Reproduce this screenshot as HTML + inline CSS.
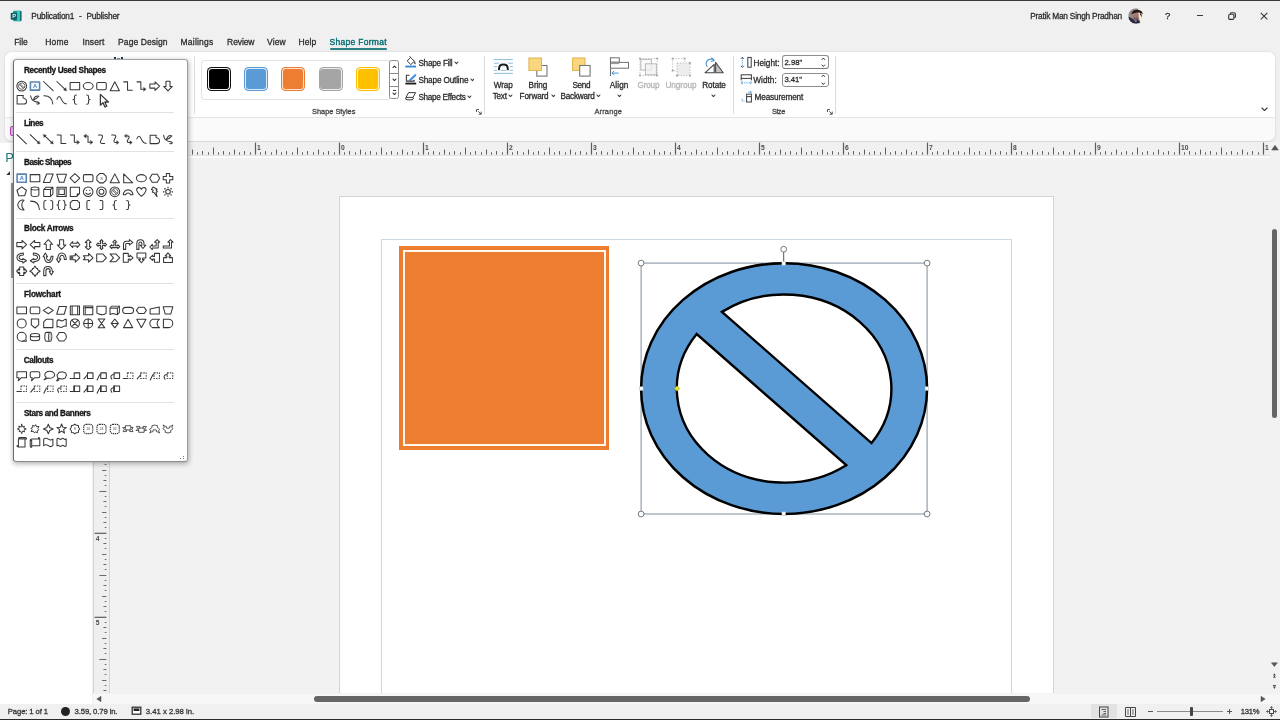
<!DOCTYPE html><html lang="en"><head><meta charset="utf-8"><title>Publication1 - Publisher</title><style>
*{box-sizing:border-box;margin:0;padding:0}
html,body{width:1280px;height:720px;overflow:hidden}
body{position:relative;background:#f0f0f0;font-family:"Liberation Sans",sans-serif;font-size:11.5px;color:#262626}
.abs{position:absolute}
.t{position:absolute;white-space:nowrap;line-height:1;-webkit-text-stroke:0.28px currentColor}
</style></head><body><div id="app" style="position:absolute;left:0;top:0;width:1280px;height:720px;will-change:transform">
<div class="abs" style="left:0;top:0;width:1280px;height:1px;background:#383838"></div>

<svg class="abs" style="left:10px;top:9.6px" width="12.4" height="12.4" viewBox="0 0 14 14">
<rect x="3.4" y="0.8" width="9.4" height="12" rx="1.3" fill="#1d9a96"/>
<rect x="7.8" y="0.8" width="3.4" height="12" fill="#3ec8be"/>
<rect x="11.4" y="1.2" width="1.5" height="11.2" rx=".6" fill="#0c6a6c"/>
<rect x="0.8" y="3" width="7.2" height="8" rx="1.1" fill="#0b5c66"/>
<text x="4.6" y="9.6" font-family="Liberation Sans, sans-serif" font-weight="bold" font-size="6.4" fill="#d8fbf8" text-anchor="middle">P</text>
</svg>
<div class="t" style="left:31.30px;top:10px;line-height:12px;font-size:8.3px;color:#2b2b2b;letter-spacing:-0.190px;word-spacing:2.744px;">Publication1 - Publisher</div><div class="t" style="left:1030.20px;top:10px;line-height:12px;font-size:8.3px;color:#2b2b2b;letter-spacing:-0.211px;">Pratik Man Singh Pradhan</div>
<svg class="abs" style="left:1127px;top:6.7px" width="18" height="18" viewBox="0 0 18 18">
<defs><clipPath id="av"><circle cx="9" cy="9" r="8"/></clipPath><filter id="avb" x="-10%" y="-10%" width="120%" height="120%"><feGaussianBlur stdDeviation="0.45"/></filter></defs>
<g clip-path="url(#av)"><g filter="url(#avb)"><rect x="-1" y="-1" width="20" height="20" fill="#968c8c"/>
<path d="M11 2 H19 V15 L13 15.5 Q11.4 9 11 2Z" fill="#f1ecdc"/>
<ellipse cx="8.7" cy="8.4" rx="2.7" ry="3.4" fill="#a9776a"/>
<path d="M6.6 9.8 Q8.8 13.4 10.8 9.6 L10.6 11.6 Q8.8 13.6 6.8 11.6Z" fill="#5e3f3c"/>
<path d="M4.2 7.4 Q5.4 2.4 10.6 2.8 Q15 3.4 16 7 Q12.4 4.8 9.8 5.6 Q6.4 6.4 4.2 7.4Z" fill="#22161a"/>
<path d="M13.4 5.4 Q15.4 7.4 14.6 10.4 Q14 8.4 12.8 7.4Z" fill="#4a3a38"/>
<path d="M0 9.6 Q3 10 5.8 12 Q7.6 13.6 8.8 13 Q10.2 11.6 11 12.6 Q13 15 14 16.4 L12 19 H0Z" fill="#2a2740"/>
<path d="M7.2 12.4 L8.8 13.6 L10 12.2 L9.4 15 L8 15Z" fill="#8c7f9e"/>
</g></g><circle cx="9" cy="9" r="8.1" fill="none" stroke="#f6f4f4" stroke-width=".7"/></svg>
<div class="t" style="left:1165.1px;top:11px;font-size:9.6px;color:#2e2e2e">?</div>
<div class="abs" style="left:1196.7px;top:14.7px;width:6.7px;height:1.1px;background:#3a3a3a"></div>
<svg class="abs" style="left:1227px;top:11px" width="10" height="10" viewBox="0 0 10 10" fill="none" stroke="#333" stroke-width="1.1">
<rect x="1.7" y="3.2" width="5.2" height="5.2" rx="1.2"/><path d="M3.4 3 V2.6 Q3.4 1.7 4.4 1.7 H7 Q8.4 1.7 8.4 3.1 V5.8 Q8.4 6.7 7.4 6.7 H7.1"/></svg>
<svg class="abs" style="left:1259px;top:10.7px" width="10" height="10" viewBox="0 0 10 10" fill="none" stroke="#333" stroke-width="1.05"><path d="M1.8 1.8 L8.3 8.3 M8.3 1.8 L1.8 8.3"/></svg>

<div class="t" style="left:14.30px;top:36px;line-height:12px;font-size:8.5px;color:#2b2b2b;letter-spacing:-0.126px;">File</div><div class="t" style="left:45.30px;top:36px;line-height:12px;font-size:8.5px;color:#2b2b2b;letter-spacing:0.153px;">Home</div><div class="t" style="left:82.40px;top:36px;line-height:12px;font-size:8.5px;color:#2b2b2b;letter-spacing:0.139px;">Insert</div><div class="t" style="left:118.10px;top:36px;line-height:12px;font-size:8.5px;color:#2b2b2b;letter-spacing:0.080px;">Page Design</div><div class="t" style="left:180.50px;top:36px;line-height:12px;font-size:8.5px;color:#2b2b2b;letter-spacing:0.227px;">Mailings</div><div class="t" style="left:227.10px;top:36px;line-height:12px;font-size:8.5px;color:#2b2b2b;letter-spacing:-0.096px;">Review</div><div class="t" style="left:267.10px;top:36px;line-height:12px;font-size:8.5px;color:#2b2b2b;letter-spacing:0.105px;">View</div><div class="t" style="left:298.60px;top:36px;line-height:12px;font-size:8.5px;color:#2b2b2b;letter-spacing:0.079px;">Help</div><div class="t" style="left:329.60px;top:36px;line-height:12px;font-size:8.5px;color:#17767b;letter-spacing:0.285px;text-shadow:0 0 0.4px #17767b;">Shape Format</div><div class="abs" style="left:330px;top:48px;width:56.8px;height:1.8px;background:#2a8186;border-radius:1px"></div>
<div class="abs" style="left:5.4px;top:52.2px;width:1269.4px;height:89.3px;background:#fafafa;border-radius:7px;box-shadow:0 0.5px 2.5px rgba(0,0,0,.15)"></div>
<div class="abs" style="left:5.4px;top:52.2px;width:1269.4px;height:66px;background:#fff;border-radius:7px 7px 0 0;border-bottom:1px solid #e6e6e6"></div>
<div class="abs" style="left:113.9px;top:57.3px;width:2.2px;height:2.4px;background:#22364e"></div><div class="abs" style="left:117.1px;top:57.9px;width:2.6px;height:1.6px;background:#8e8e8e"></div><div class="abs" style="left:120.8px;top:57.3px;width:2.2px;height:2.4px;background:#22364e"></div>
<div class="abs" style="left:194px;top:56px;width:1px;height:58px;background:#dcdcdc"></div>
<div class="abs" style="left:201px;top:60px;width:188.5px;height:39.5px;border:1px solid #e3e3e3;border-radius:3px 0 0 3px;background:#fff"></div>
<div class="abs" style="left:206.8px;top:67px;width:24px;height:24px;border-radius:4.6px;background:#111"></div><div class="abs" style="left:207.8px;top:68px;width:22px;height:22px;border-radius:3.8px;background:#f2f2f2"></div><div class="abs" style="left:208.70000000000002px;top:68.9px;width:20.2px;height:20.2px;border-radius:3.1px;background:#000"></div>
<div class="abs" style="left:243.8px;top:67px;width:24px;height:24px;border-radius:4.6px;background:#5b9bd5"></div><div class="abs" style="left:244.8px;top:68px;width:22px;height:22px;border-radius:3.8px;background:#deebf8"></div><div class="abs" style="left:245.70000000000002px;top:68.9px;width:20.2px;height:20.2px;border-radius:3.1px;background:#5b9bd5"></div>
<div class="abs" style="left:281px;top:67px;width:24px;height:24px;border-radius:4.6px;background:#ed7d31"></div><div class="abs" style="left:282px;top:68px;width:22px;height:22px;border-radius:3.8px;background:#fde3d0"></div><div class="abs" style="left:282.9px;top:68.9px;width:20.2px;height:20.2px;border-radius:3.1px;background:#ed7d31"></div>
<div class="abs" style="left:318.5px;top:67px;width:24px;height:24px;border-radius:4.6px;background:#a5a5a5"></div><div class="abs" style="left:319.5px;top:68px;width:22px;height:22px;border-radius:3.8px;background:#ececec"></div><div class="abs" style="left:320.4px;top:68.9px;width:20.2px;height:20.2px;border-radius:3.1px;background:#a5a5a5"></div>
<div class="abs" style="left:355.8px;top:67px;width:24px;height:24px;border-radius:4.6px;background:#ffc000"></div><div class="abs" style="left:356.8px;top:68px;width:22px;height:22px;border-radius:3.8px;background:#fff3cc"></div><div class="abs" style="left:357.7px;top:68.9px;width:20.2px;height:20.2px;border-radius:3.1px;background:#ffc000"></div>
<div class="abs" style="left:389.2px;top:59.8px;width:10.2px;height:39.6px;border:1px solid #8c8c8c;border-radius:2.6px;background:#fff"></div>
<div class="abs" style="left:389.7px;top:72.5px;width:9.2px;height:1px;background:#8c8c8c"></div><div class="abs" style="left:389.7px;top:85.7px;width:9.2px;height:1px;background:#8c8c8c"></div>
<svg class="abs" style="left:391.85px;top:64.50px" width="4.9" height="3.6" viewBox="0 0 4.9 3.6"><path d="M1 2.6 L2.45 1 L3.9 2.6" fill="none" stroke="#333" stroke-width="1.1" stroke-linecap="round" stroke-linejoin="round"/></svg>
<svg class="abs" style="left:391.85px;top:77.80px" width="4.9" height="3.6" viewBox="0 0 4.9 3.6"><path d="M1 1 L2.45 2.6 L3.9 1" fill="none" stroke="#333" stroke-width="1.1" stroke-linecap="round" stroke-linejoin="round"/></svg>
<div class="abs" style="left:392.5px;top:90.4px;width:3.6px;height:1px;background:#333"></div>
<svg class="abs" style="left:391.85px;top:91.70px" width="4.9" height="3.6" viewBox="0 0 4.9 3.6"><path d="M1 1 L2.45 2.6 L3.9 1" fill="none" stroke="#333" stroke-width="1.1" stroke-linecap="round" stroke-linejoin="round"/></svg>
<svg class="abs" style="left:404px;top:55px" width="14" height="14" viewBox="0 0 14 14" fill="none" stroke="#3a3a3a" stroke-width="1" stroke-linejoin="round"><path d="M3.2 6 L6.6 2.4 L10.4 6.2 L6.8 9.6 Z" fill="#fff"/><path d="M6.6 2.4 L5.6 1.2"/><path d="M10.6 6.4 Q12 8.4 11 9.2 Q10 8.4 10.6 6.4Z" fill="#3a3a3a" stroke-width=".5"/><rect x="1.3" y="10.6" width="10.7" height="1.9" fill="#3a8ad8" stroke="none"/></svg>
<div class="t" style="left:418.40px;top:58px;line-height:12px;font-size:8.2px;color:#2a2a2a;letter-spacing:-0.242px;">Shape Fill</div>
<svg class="abs" style="left:453.75px;top:61.00px" width="4.9" height="3.6" viewBox="0 0 4.9 3.6"><path d="M1 1 L2.45 2.6 L3.9 1" fill="none" stroke="#3a3a3a" stroke-width="1.1" stroke-linecap="round" stroke-linejoin="round"/></svg>
<svg class="abs" style="left:404px;top:72px" width="14" height="14" viewBox="0 0 14 14" fill="none" stroke="#3a3a3a" stroke-width="1.1" stroke-linejoin="round"><path d="M5.6 3.2 H2.4 V9.1 H10.2 V7.8"/><path d="M11.2 3.2 L6.2 8" stroke="#3f8fdc" stroke-width="2.1" stroke-linecap="round"/><path d="M5.6 8.7 L5 9.3" stroke="#3a3a3a" stroke-width="1"/><rect x="1.4" y="10.6" width="10.8" height="1.9" fill="#1e1e1e" stroke="none"/></svg>
<div class="t" style="left:418.40px;top:75px;line-height:12px;font-size:8.2px;color:#2a2a2a;letter-spacing:-0.154px;">Shape Outline</div>
<svg class="abs" style="left:469.55px;top:78.20px" width="4.9" height="3.6" viewBox="0 0 4.9 3.6"><path d="M1 1 L2.45 2.6 L3.9 1" fill="none" stroke="#3a3a3a" stroke-width="1.1" stroke-linecap="round" stroke-linejoin="round"/></svg>
<svg class="abs" style="left:404px;top:89px" width="14" height="14" viewBox="0 0 14 14" fill="none" stroke="#3a3a3a" stroke-width="1" stroke-linejoin="round"><path d="M4.6 3.6 H11.6 L9 8.4 H2 Z" fill="#fff"/><path d="M2 8.4 Q0.8 10.6 3 10.8 H8.2 Q9.8 10.6 9 8.4"/></svg>
<div class="t" style="left:418.40px;top:92px;line-height:12px;font-size:8.2px;color:#2a2a2a;letter-spacing:-0.287px;">Shape Effects</div>
<svg class="abs" style="left:467.25px;top:95.40px" width="4.9" height="3.6" viewBox="0 0 4.9 3.6"><path d="M1 1 L2.45 2.6 L3.9 1" fill="none" stroke="#3a3a3a" stroke-width="1.1" stroke-linecap="round" stroke-linejoin="round"/></svg>
<div class="t" style="left:312.10px;top:106px;line-height:12px;font-size:7.4px;color:#444;letter-spacing:-0.022px;">Shape Styles</div>
<svg class="abs" style="left:476.0px;top:109.1px" width="5.8" height="5.8" viewBox="0 0 7 7" fill="none" stroke="#4a4a4a" stroke-width="1.15"><path d="M0.6 3.6 V0.6 H3.6"/><path d="M2.8 2.8 L6.2 6.2 M6.3 3.2 V6.3 H3.2"/></svg>
<div class="abs" style="left:483.5px;top:56px;width:1px;height:58px;background:#dcdcdc"></div>
<svg class="abs" style="left:493px;top:56px" width="21" height="20" viewBox="0 0 21 20" fill="none"><path d="M0.9 3.6 H19.9 M0.9 7.2 H19.9 M0.9 10.7 H19.9 M0.9 14.3 H19.9 M0.9 17.4 H19.9" stroke="#8cbbdc" stroke-width="1"/><path d="M6 14.4 V13 Q6 8.2 10.4 8.2 Q14.8 8.2 14.8 13 V14.4" stroke="#fff" stroke-width="4.6"/><path d="M6 14 V13 Q6 8.6 10.4 8.6 Q14.8 8.6 14.8 13 V14" stroke="#1e1e1e" stroke-width="2"/></svg>
<div class="t" style="left:493.70px;top:80px;line-height:12px;font-size:8.2px;color:#2a2a2a;letter-spacing:-0.080px;">Wrap</div>
<div class="t" style="left:492.70px;top:91px;line-height:12px;font-size:8.2px;color:#2a2a2a;letter-spacing:-0.254px;">Text</div>
<svg class="abs" style="left:508.45px;top:93.80px" width="4.9" height="3.6" viewBox="0 0 4.9 3.6"><path d="M1 1 L2.45 2.6 L3.9 1" fill="none" stroke="#3a3a3a" stroke-width="1.1" stroke-linecap="round" stroke-linejoin="round"/></svg>
<svg class="abs" style="left:526px;top:55px" width="24" height="24" viewBox="0 0 24 24"><rect x="10.8" y="10.5" width="10.2" height="10.6" fill="#fff" stroke="#777" stroke-width="1.1"/><rect x="2.9" y="3" width="12.6" height="12.4" fill="#fad67f" stroke="#e0b24c" stroke-width="1"/></svg>
<div class="t" style="left:528.50px;top:80px;line-height:12px;font-size:8.2px;color:#2a2a2a;letter-spacing:-0.065px;">Bring</div>
<div class="t" style="left:519.60px;top:91px;line-height:12px;font-size:8.2px;color:#2a2a2a;letter-spacing:-0.162px;">Forward</div>
<svg class="abs" style="left:550.55px;top:93.90px" width="4.9" height="3.6" viewBox="0 0 4.9 3.6"><path d="M1 1 L2.45 2.6 L3.9 1" fill="none" stroke="#3a3a3a" stroke-width="1.1" stroke-linecap="round" stroke-linejoin="round"/></svg>
<svg class="abs" style="left:570px;top:55px" width="24" height="24" viewBox="0 0 24 24"><rect x="2.6" y="3" width="12.4" height="12.4" fill="#fad67f" stroke="#e0b24c" stroke-width="1"/><rect x="9.7" y="10.5" width="10.4" height="10.6" fill="#fff" stroke="#777" stroke-width="1.1"/></svg>
<div class="t" style="left:572.40px;top:80px;line-height:12px;font-size:8.2px;color:#2a2a2a;letter-spacing:-0.331px;">Send</div>
<div class="t" style="left:560.50px;top:91px;line-height:12px;font-size:8.2px;color:#2a2a2a;letter-spacing:-0.244px;">Backward</div>
<svg class="abs" style="left:596.45px;top:93.90px" width="4.9" height="3.6" viewBox="0 0 4.9 3.6"><path d="M1 1 L2.45 2.6 L3.9 1" fill="none" stroke="#3a3a3a" stroke-width="1.1" stroke-linecap="round" stroke-linejoin="round"/></svg>
<svg class="abs" style="left:608px;top:55px" width="24" height="24" viewBox="0 0 24 24" fill="none"><path d="M2.5 2.3 V21" stroke="#707070" stroke-width="1.1"/><rect x="2.5" y="2.8" width="8.8" height="4.4" fill="#fff" stroke="#707070"/><rect x="2.5" y="7.4" width="18" height="5.8" fill="#fff" stroke="#707070"/><rect x="3" y="7.4" width="8.3" height="1.7" fill="#9a9a9a"/><path d="M10.6 18.1 H4.2 M6.2 15.9 L4 18.1 L6.2 20.3" stroke="#4a96d0" stroke-width="1"/></svg>
<div class="t" style="left:609.80px;top:80px;line-height:12px;font-size:8.2px;color:#2a2a2a;letter-spacing:0.096px;">Align</div>
<svg class="abs" style="left:616.65px;top:93.70px" width="4.9" height="3.6" viewBox="0 0 4.9 3.6"><path d="M1 1 L2.45 2.6 L3.9 1" fill="none" stroke="#3a3a3a" stroke-width="1.1" stroke-linecap="round" stroke-linejoin="round"/></svg>
<svg class="abs" style="left:637px;top:55px" width="24" height="24" viewBox="0 0 24 24" fill="none" stroke="#b8b8b8"><rect x="3" y="3.6" width="17.2" height="16.8" stroke-dasharray="1.2 1.6" stroke-width="1"/><rect x="3.8" y="4.4" width="10.6" height="10.6" fill="#fafafa"/><rect x="8.4" y="8.8" width="11" height="11" fill="#f0f0f0" fill-opacity=".75"/><g fill="#a0a0a0" stroke="none"><rect x="2.1" y="2.7" width="1.8" height="1.8"/><rect x="19.3" y="2.7" width="1.8" height="1.8"/><rect x="2.1" y="19.5" width="1.8" height="1.8"/><rect x="19.3" y="19.5" width="1.8" height="1.8"/></g></svg>
<div class="t" style="left:637.60px;top:80px;line-height:12px;font-size:8.2px;color:#b4b4b4;letter-spacing:-0.213px;">Group</div>
<svg class="abs" style="left:669px;top:55px" width="24" height="24" viewBox="0 0 24 24" fill="none" stroke="#b8b8b8"><rect x="3.6" y="3.6" width="12" height="12" stroke-dasharray="1.2 1.6"/><rect x="8" y="8" width="13" height="12.6" fill="#ededed" stroke-dasharray="1.2 1.6"/><g fill="#a0a0a0" stroke="none"><rect x="2.7" y="2.7" width="1.8" height="1.8"/><rect x="14.7" y="2.7" width="1.8" height="1.8"/><rect x="2.7" y="14.7" width="1.8" height="1.8"/><rect x="20.1" y="7.1" width="1.8" height="1.8"/><rect x="20.1" y="19.7" width="1.8" height="1.8"/><rect x="7.1" y="19.7" width="1.8" height="1.8"/></g></svg>
<div class="t" style="left:665.50px;top:80px;line-height:12px;font-size:8.2px;color:#b4b4b4;letter-spacing:-0.060px;">Ungroup</div>
<svg class="abs" style="left:702px;top:55px" width="24" height="24" viewBox="0 0 24 24" fill="none"><path d="M3 17.8 L12.2 9.4 V17.8 Z" fill="#fff" stroke="#444" stroke-width="1.1" stroke-linejoin="round"/><path d="M13.6 7.2 L21.2 17.8 H13.6 Z" fill="#c4c4c4" stroke="#4a4a4a" stroke-width="1.1" stroke-linejoin="round"/><path d="M5.4 12 Q2.6 7.6 6 5 Q9.4 3 12 5.4" stroke="#4a96d0" stroke-width="1.1"/><path d="M9.4 2.6 L12.2 5.4 L8.8 6.6" stroke="#4a96d0" stroke-width="1.1" stroke-linejoin="round"/></svg>
<div class="t" style="left:702.30px;top:80px;line-height:12px;font-size:8.2px;color:#2a2a2a;letter-spacing:-0.104px;">Rotate</div>
<svg class="abs" style="left:711.15px;top:93.70px" width="4.9" height="3.6" viewBox="0 0 4.9 3.6"><path d="M1 1 L2.45 2.6 L3.9 1" fill="none" stroke="#3a3a3a" stroke-width="1.1" stroke-linecap="round" stroke-linejoin="round"/></svg>
<div class="t" style="left:594.50px;top:106px;line-height:12px;font-size:7.4px;color:#444;letter-spacing:0.172px;">Arrange</div>
<div class="abs" style="left:733px;top:56px;width:1px;height:58px;background:#dcdcdc"></div>
<svg class="abs" style="left:740px;top:56px" width="13" height="13" viewBox="0 0 13 13" fill="none"><rect x="7.8" y="1.4" width="3.4" height="9.8" stroke="#3a3a3a" fill="#fff"/><path d="M2.4 2 V10.8" stroke="#4a96d0" stroke-dasharray="1.1 1.1"/><path d="M1 2.8 L2.4 1.2 L3.8 2.8 M1 9.8 L2.4 11.4 L3.8 9.8" stroke="#3a3a3a" stroke-width=".9"/></svg>
<div class="t" style="left:753.60px;top:58px;line-height:12px;font-size:8.2px;color:#2a2a2a;letter-spacing:-0.008px;">Height:</div>
<div class="abs" style="left:782.4px;top:54.9px;width:47px;height:14.6px;border:1px solid #8e8e8e;border-bottom:1.4px solid #787878;border-radius:3px;background:#fff"></div>
<div class="t" style="left:784.50px;top:57px;line-height:12px;font-size:7.7px;color:#2a2a2a;letter-spacing:0.019px;">2.98&quot;</div>
<svg class="abs" style="left:821.10px;top:57.15px" width="4.6" height="3.5" viewBox="0 0 4.6 3.5"><path d="M1 2.5 L2.3 1 L3.6 2.5" fill="none" stroke="#333" stroke-width="1" stroke-linecap="round" stroke-linejoin="round"/></svg>
<svg class="abs" style="left:821.10px;top:64.05px" width="4.6" height="3.5" viewBox="0 0 4.6 3.5"><path d="M1 1 L2.3 2.5 L3.6 1" fill="none" stroke="#333" stroke-width="1" stroke-linecap="round" stroke-linejoin="round"/></svg>
<svg class="abs" style="left:740px;top:73px" width="13" height="13" viewBox="0 0 13 13" fill="none"><rect x="1.2" y="1.8" width="10.2" height="3.6" stroke="#3a3a3a" fill="#fff"/><path d="M1.2 5.4 V7.4 M11.4 5.4 V7.4" stroke="#3a3a3a"/><path d="M2 9.8 H10.8" stroke="#4a96d0" stroke-dasharray="1.1 1.1"/><path d="M2.6 8.4 L1 9.8 L2.6 11.2 M10 8.4 L11.6 9.8 L10 11.2" stroke="#4a96d0" stroke-width=".9"/></svg>
<div class="t" style="left:753.30px;top:75px;line-height:12px;font-size:8.2px;color:#2a2a2a;letter-spacing:0.047px;">Width:</div>
<div class="abs" style="left:782.4px;top:72.6px;width:47px;height:14.7px;border:1px solid #8e8e8e;border-radius:3px;background:#fff"></div>
<div class="t" style="left:784.50px;top:74px;line-height:12px;font-size:7.7px;color:#2a2a2a;letter-spacing:-0.081px;">3.41&quot;</div>
<svg class="abs" style="left:821.10px;top:74.25px" width="4.6" height="3.5" viewBox="0 0 4.6 3.5"><path d="M1 2.5 L2.3 1 L3.6 2.5" fill="none" stroke="#333" stroke-width="1" stroke-linecap="round" stroke-linejoin="round"/></svg>
<svg class="abs" style="left:821.10px;top:81.85px" width="4.6" height="3.5" viewBox="0 0 4.6 3.5"><path d="M1 1 L2.3 2.5 L3.6 1" fill="none" stroke="#333" stroke-width="1" stroke-linecap="round" stroke-linejoin="round"/></svg>
<svg class="abs" style="left:740px;top:91px" width="13" height="13" viewBox="0 0 13 13" fill="none"><rect x="6.6" y="5.6" width="4.8" height="5.4" stroke="#3a3a3a" fill="#fff"/><path d="M6.6 3.2 H11.4 M6.6 2.6 V5.6 M11.4 2.6 V5.6" stroke="#3a3a3a" stroke-width=".9"/><path d="M2.2 7.6 V11 M4 9.4 V11" stroke="#4a96d0" stroke-dasharray="1 .8"/><path d="M8 1.2 H11.4 M10.2 0.2 L11.4 1.2 L10.2 2.2" stroke="#4a96d0" stroke-width=".8"/></svg>
<div class="t" style="left:754.50px;top:92px;line-height:12px;font-size:8.2px;color:#2a2a2a;letter-spacing:-0.124px;">Measurement</div>
<div class="t" style="left:771.90px;top:106px;line-height:12px;font-size:7.4px;color:#444;letter-spacing:-0.298px;">Size</div>
<svg class="abs" style="left:826.9px;top:109.1px" width="5.8" height="5.8" viewBox="0 0 7 7" fill="none" stroke="#4a4a4a" stroke-width="1.15"><path d="M0.6 3.6 V0.6 H3.6"/><path d="M2.8 2.8 L6.2 6.2 M6.3 3.2 V6.3 H3.2"/></svg>
<div class="abs" style="left:834.6px;top:56px;width:1px;height:58px;background:#dcdcdc"></div>
<svg class="abs" style="left:1260.90px;top:106.70px" width="7" height="4.6" viewBox="0 0 7 4.6"><path d="M1 1 L3.5 3.6 L6 1" fill="none" stroke="#333" stroke-width="1.1" stroke-linecap="round" stroke-linejoin="round"/></svg>
<div class="abs" style="left:0;top:142px;width:1280px;height:562px;background:#f2f2f2"></div>
<div class="abs" style="left:110px;top:142px;width:1159.5px;height:14.2px;background:#f0f0f0;border-bottom:1px solid #e2e2e2"></div>
<div class="abs" style="left:110px;top:156.2px;width:1159.5px;height:1.8px;background:#fbfbfb"></div>
<div class="abs" style="left:92.5px;top:157px;width:17.2px;height:536px;background:#efefef;border-left:1px solid #d2d2d2;border-right:1px solid #d4d4d4"></div>
<div class="abs" style="left:0;top:143px;width:92px;height:561px;background:#fff"></div>

<div class="t" style="left:5.2px;top:150.9px;font-size:13.1px;color:#217a7c;-webkit-text-stroke:0">P</div>
<svg class="abs" style="left:6px;top:171.4px" width="4.4" height="4.4" viewBox="0 0 6 6"><path d="M5.4 0.4 V5.4 H0.4Z" fill="#2a2a2a"/></svg>
<div class="abs" style="left:11px;top:183px;width:2.4px;height:95px;background:#959595"></div>
<div class="abs" style="left:10.2px;top:125.6px;width:5px;height:10px;background:#e9c3ea;border:1.3px solid #b646b8;border-radius:2px 0 0 2px"></div>

<div class="abs" style="left:92.5px;top:693.5px;width:1187.5px;height:10.5px;background:#f7f7f7"></div><div class="abs" style="left:338.9px;top:195.6px;width:715.6px;height:497.9px;background:#fff;border:1px solid #d4d4d4;border-bottom:none"></div>
<div class="abs" style="left:380.8px;top:238.7px;width:631.6px;height:454.8px;border:1px solid #c6d9e5;border-bottom:none"></div>
<div class="abs" style="left:398.9px;top:246.4px;width:210.2px;height:203.4px;background:#ed7d31"></div>
<div class="abs" style="left:402.8px;top:250.3px;width:202.8px;height:196.1px;border:2.6px solid #fff6ec"></div>
<svg class="abs" style="left:0;top:0" width="1280" height="720" viewBox="0 0 1280 720"><rect x="641.1" y="263.1" width="286.0" height="250.89999999999998" fill="none" stroke="#8a97a8" stroke-width="1.1"/><ellipse cx="784.1" cy="388.55" rx="143.0" ry="125.4" fill="#5b9bd5" stroke="#000" stroke-width="2.5"/><path d="M721.96 311.89 A107.25 94.05 0 0 1 871.52 443.04 Z" fill="#fff" stroke="#000" stroke-width="2.4" stroke-linejoin="miter"/><path d="M846.24 465.21 A107.25 94.05 0 0 1 696.68 334.06 Z" fill="#fff" stroke="#000" stroke-width="2.4" stroke-linejoin="miter"/><line x1="783.7" y1="252" x2="783.7" y2="261.6" stroke="#454545" stroke-width="0.9"/><circle cx="641.1" cy="263.1" r="2.9" fill="#fff" stroke="#636363" stroke-width=".85"/><circle cx="927.1" cy="263.1" r="2.9" fill="#fff" stroke="#636363" stroke-width=".85"/><circle cx="641.1" cy="514.0" r="2.9" fill="#fff" stroke="#636363" stroke-width=".85"/><circle cx="927.1" cy="514.0" r="2.9" fill="#fff" stroke="#636363" stroke-width=".85"/><circle cx="783.7" cy="249.2" r="2.9" fill="#fff" stroke="#636363" stroke-width=".85"/><rect x="781.95" y="261.65000000000003" width="3.5" height="3.5" fill="#fafdff" stroke="#b9c4d0" stroke-width="0.5"/><rect x="781.95" y="511.95000000000005" width="3.5" height="3.5" fill="#fafdff" stroke="#b9c4d0" stroke-width="0.5"/><rect x="639.5500000000001" y="386.8" width="3.5" height="3.5" fill="#fafdff" stroke="#b9c4d0" stroke-width="0.5"/><rect x="925.15" y="386.8" width="3.5" height="3.5" fill="#fafdff" stroke="#b9c4d0" stroke-width="0.5"/><rect x="675.1" y="386.65000000000003" width="3.8" height="3.8" transform="rotate(45 677 388.55)" fill="#e6e61a" stroke="#8e8e3a" stroke-width="0.6"/></svg>
<svg class="abs" style="left:0;top:0" width="1280" height="160" viewBox="0 0 1280 160"><g font-family="Liberation Sans, sans-serif" font-size="6.7" font-weight="bold" fill="#4a4a4a"><rect x="113" y="152.30" width="1" height="2.30" fill="#5e5e5e"/><rect x="118" y="151.10" width="1" height="3.50" fill="#5e5e5e"/><rect x="124" y="152.30" width="1" height="2.30" fill="#5e5e5e"/><rect x="129" y="147.60" width="1" height="7.00" fill="#5e5e5e"/><rect x="134" y="152.30" width="1" height="2.30" fill="#5e5e5e"/><rect x="139" y="151.10" width="1" height="3.50" fill="#5e5e5e"/><rect x="145" y="152.30" width="1" height="2.30" fill="#5e5e5e"/><rect x="150" y="149.60" width="1" height="5.00" fill="#5e5e5e"/><rect x="155" y="152.30" width="1" height="2.30" fill="#5e5e5e"/><rect x="160" y="151.10" width="1" height="3.50" fill="#5e5e5e"/><rect x="166" y="152.30" width="1" height="2.30" fill="#5e5e5e"/><rect x="170.90" y="142.6" width="1.2" height="12" fill="#5c5c5c"/><rect x="176" y="152.30" width="1" height="2.30" fill="#5e5e5e"/><rect x="181" y="151.10" width="1" height="3.50" fill="#5e5e5e"/><rect x="187" y="152.30" width="1" height="2.30" fill="#5e5e5e"/><rect x="192" y="149.60" width="1" height="5.00" fill="#5e5e5e"/><rect x="197" y="152.30" width="1" height="2.30" fill="#5e5e5e"/><rect x="202" y="151.10" width="1" height="3.50" fill="#5e5e5e"/><rect x="208" y="152.30" width="1" height="2.30" fill="#5e5e5e"/><rect x="213" y="147.60" width="1" height="7.00" fill="#5e5e5e"/><rect x="218" y="152.30" width="1" height="2.30" fill="#5e5e5e"/><rect x="223" y="151.10" width="1" height="3.50" fill="#5e5e5e"/><rect x="229" y="152.30" width="1" height="2.30" fill="#5e5e5e"/><rect x="234" y="149.60" width="1" height="5.00" fill="#5e5e5e"/><rect x="239" y="152.30" width="1" height="2.30" fill="#5e5e5e"/><rect x="244" y="151.10" width="1" height="3.50" fill="#5e5e5e"/><rect x="250" y="152.30" width="1" height="2.30" fill="#5e5e5e"/><rect x="254.90" y="142.6" width="1.2" height="12" fill="#5c5c5c"/><rect x="260" y="152.30" width="1" height="2.30" fill="#5e5e5e"/><rect x="265" y="151.10" width="1" height="3.50" fill="#5e5e5e"/><rect x="271" y="152.30" width="1" height="2.30" fill="#5e5e5e"/><rect x="276" y="149.60" width="1" height="5.00" fill="#5e5e5e"/><rect x="281" y="152.30" width="1" height="2.30" fill="#5e5e5e"/><rect x="286" y="151.10" width="1" height="3.50" fill="#5e5e5e"/><rect x="292" y="152.30" width="1" height="2.30" fill="#5e5e5e"/><rect x="297" y="147.60" width="1" height="7.00" fill="#5e5e5e"/><rect x="302" y="152.30" width="1" height="2.30" fill="#5e5e5e"/><rect x="307" y="151.10" width="1" height="3.50" fill="#5e5e5e"/><rect x="313" y="152.30" width="1" height="2.30" fill="#5e5e5e"/><rect x="318" y="149.60" width="1" height="5.00" fill="#5e5e5e"/><rect x="323" y="152.30" width="1" height="2.30" fill="#5e5e5e"/><rect x="328" y="151.10" width="1" height="3.50" fill="#5e5e5e"/><rect x="334" y="152.30" width="1" height="2.30" fill="#5e5e5e"/><rect x="338.90" y="142.6" width="1.2" height="12" fill="#5c5c5c"/><rect x="344" y="152.30" width="1" height="2.30" fill="#5e5e5e"/><rect x="349" y="151.10" width="1" height="3.50" fill="#5e5e5e"/><rect x="355" y="152.30" width="1" height="2.30" fill="#5e5e5e"/><rect x="360" y="149.60" width="1" height="5.00" fill="#5e5e5e"/><rect x="365" y="152.30" width="1" height="2.30" fill="#5e5e5e"/><rect x="370" y="151.10" width="1" height="3.50" fill="#5e5e5e"/><rect x="376" y="152.30" width="1" height="2.30" fill="#5e5e5e"/><rect x="381" y="147.60" width="1" height="7.00" fill="#5e5e5e"/><rect x="386" y="152.30" width="1" height="2.30" fill="#5e5e5e"/><rect x="391" y="151.10" width="1" height="3.50" fill="#5e5e5e"/><rect x="397" y="152.30" width="1" height="2.30" fill="#5e5e5e"/><rect x="402" y="149.60" width="1" height="5.00" fill="#5e5e5e"/><rect x="407" y="152.30" width="1" height="2.30" fill="#5e5e5e"/><rect x="412" y="151.10" width="1" height="3.50" fill="#5e5e5e"/><rect x="418" y="152.30" width="1" height="2.30" fill="#5e5e5e"/><rect x="422.90" y="142.6" width="1.2" height="12" fill="#5c5c5c"/><rect x="428" y="152.30" width="1" height="2.30" fill="#5e5e5e"/><rect x="433" y="151.10" width="1" height="3.50" fill="#5e5e5e"/><rect x="439" y="152.30" width="1" height="2.30" fill="#5e5e5e"/><rect x="444" y="149.60" width="1" height="5.00" fill="#5e5e5e"/><rect x="449" y="152.30" width="1" height="2.30" fill="#5e5e5e"/><rect x="454" y="151.10" width="1" height="3.50" fill="#5e5e5e"/><rect x="460" y="152.30" width="1" height="2.30" fill="#5e5e5e"/><rect x="465" y="147.60" width="1" height="7.00" fill="#5e5e5e"/><rect x="470" y="152.30" width="1" height="2.30" fill="#5e5e5e"/><rect x="475" y="151.10" width="1" height="3.50" fill="#5e5e5e"/><rect x="481" y="152.30" width="1" height="2.30" fill="#5e5e5e"/><rect x="486" y="149.60" width="1" height="5.00" fill="#5e5e5e"/><rect x="491" y="152.30" width="1" height="2.30" fill="#5e5e5e"/><rect x="496" y="151.10" width="1" height="3.50" fill="#5e5e5e"/><rect x="502" y="152.30" width="1" height="2.30" fill="#5e5e5e"/><rect x="506.90" y="142.6" width="1.2" height="12" fill="#5c5c5c"/><rect x="512" y="152.30" width="1" height="2.30" fill="#5e5e5e"/><rect x="517" y="151.10" width="1" height="3.50" fill="#5e5e5e"/><rect x="523" y="152.30" width="1" height="2.30" fill="#5e5e5e"/><rect x="528" y="149.60" width="1" height="5.00" fill="#5e5e5e"/><rect x="533" y="152.30" width="1" height="2.30" fill="#5e5e5e"/><rect x="538" y="151.10" width="1" height="3.50" fill="#5e5e5e"/><rect x="544" y="152.30" width="1" height="2.30" fill="#5e5e5e"/><rect x="549" y="147.60" width="1" height="7.00" fill="#5e5e5e"/><rect x="554" y="152.30" width="1" height="2.30" fill="#5e5e5e"/><rect x="559" y="151.10" width="1" height="3.50" fill="#5e5e5e"/><rect x="565" y="152.30" width="1" height="2.30" fill="#5e5e5e"/><rect x="570" y="149.60" width="1" height="5.00" fill="#5e5e5e"/><rect x="575" y="152.30" width="1" height="2.30" fill="#5e5e5e"/><rect x="580" y="151.10" width="1" height="3.50" fill="#5e5e5e"/><rect x="586" y="152.30" width="1" height="2.30" fill="#5e5e5e"/><rect x="590.90" y="142.6" width="1.2" height="12" fill="#5c5c5c"/><rect x="596" y="152.30" width="1" height="2.30" fill="#5e5e5e"/><rect x="601" y="151.10" width="1" height="3.50" fill="#5e5e5e"/><rect x="607" y="152.30" width="1" height="2.30" fill="#5e5e5e"/><rect x="612" y="149.60" width="1" height="5.00" fill="#5e5e5e"/><rect x="617" y="152.30" width="1" height="2.30" fill="#5e5e5e"/><rect x="622" y="151.10" width="1" height="3.50" fill="#5e5e5e"/><rect x="628" y="152.30" width="1" height="2.30" fill="#5e5e5e"/><rect x="633" y="147.60" width="1" height="7.00" fill="#5e5e5e"/><rect x="638" y="152.30" width="1" height="2.30" fill="#5e5e5e"/><rect x="643" y="151.10" width="1" height="3.50" fill="#5e5e5e"/><rect x="649" y="152.30" width="1" height="2.30" fill="#5e5e5e"/><rect x="654" y="149.60" width="1" height="5.00" fill="#5e5e5e"/><rect x="659" y="152.30" width="1" height="2.30" fill="#5e5e5e"/><rect x="664" y="151.10" width="1" height="3.50" fill="#5e5e5e"/><rect x="670" y="152.30" width="1" height="2.30" fill="#5e5e5e"/><rect x="674.90" y="142.6" width="1.2" height="12" fill="#5c5c5c"/><rect x="680" y="152.30" width="1" height="2.30" fill="#5e5e5e"/><rect x="685" y="151.10" width="1" height="3.50" fill="#5e5e5e"/><rect x="691" y="152.30" width="1" height="2.30" fill="#5e5e5e"/><rect x="696" y="149.60" width="1" height="5.00" fill="#5e5e5e"/><rect x="701" y="152.30" width="1" height="2.30" fill="#5e5e5e"/><rect x="706" y="151.10" width="1" height="3.50" fill="#5e5e5e"/><rect x="712" y="152.30" width="1" height="2.30" fill="#5e5e5e"/><rect x="717" y="147.60" width="1" height="7.00" fill="#5e5e5e"/><rect x="722" y="152.30" width="1" height="2.30" fill="#5e5e5e"/><rect x="727" y="151.10" width="1" height="3.50" fill="#5e5e5e"/><rect x="733" y="152.30" width="1" height="2.30" fill="#5e5e5e"/><rect x="738" y="149.60" width="1" height="5.00" fill="#5e5e5e"/><rect x="743" y="152.30" width="1" height="2.30" fill="#5e5e5e"/><rect x="748" y="151.10" width="1" height="3.50" fill="#5e5e5e"/><rect x="754" y="152.30" width="1" height="2.30" fill="#5e5e5e"/><rect x="758.90" y="142.6" width="1.2" height="12" fill="#5c5c5c"/><rect x="764" y="152.30" width="1" height="2.30" fill="#5e5e5e"/><rect x="769" y="151.10" width="1" height="3.50" fill="#5e5e5e"/><rect x="775" y="152.30" width="1" height="2.30" fill="#5e5e5e"/><rect x="780" y="149.60" width="1" height="5.00" fill="#5e5e5e"/><rect x="785" y="152.30" width="1" height="2.30" fill="#5e5e5e"/><rect x="790" y="151.10" width="1" height="3.50" fill="#5e5e5e"/><rect x="796" y="152.30" width="1" height="2.30" fill="#5e5e5e"/><rect x="801" y="147.60" width="1" height="7.00" fill="#5e5e5e"/><rect x="806" y="152.30" width="1" height="2.30" fill="#5e5e5e"/><rect x="811" y="151.10" width="1" height="3.50" fill="#5e5e5e"/><rect x="817" y="152.30" width="1" height="2.30" fill="#5e5e5e"/><rect x="822" y="149.60" width="1" height="5.00" fill="#5e5e5e"/><rect x="827" y="152.30" width="1" height="2.30" fill="#5e5e5e"/><rect x="832" y="151.10" width="1" height="3.50" fill="#5e5e5e"/><rect x="838" y="152.30" width="1" height="2.30" fill="#5e5e5e"/><rect x="842.90" y="142.6" width="1.2" height="12" fill="#5c5c5c"/><rect x="848" y="152.30" width="1" height="2.30" fill="#5e5e5e"/><rect x="853" y="151.10" width="1" height="3.50" fill="#5e5e5e"/><rect x="859" y="152.30" width="1" height="2.30" fill="#5e5e5e"/><rect x="864" y="149.60" width="1" height="5.00" fill="#5e5e5e"/><rect x="869" y="152.30" width="1" height="2.30" fill="#5e5e5e"/><rect x="874" y="151.10" width="1" height="3.50" fill="#5e5e5e"/><rect x="880" y="152.30" width="1" height="2.30" fill="#5e5e5e"/><rect x="885" y="147.60" width="1" height="7.00" fill="#5e5e5e"/><rect x="890" y="152.30" width="1" height="2.30" fill="#5e5e5e"/><rect x="895" y="151.10" width="1" height="3.50" fill="#5e5e5e"/><rect x="901" y="152.30" width="1" height="2.30" fill="#5e5e5e"/><rect x="906" y="149.60" width="1" height="5.00" fill="#5e5e5e"/><rect x="911" y="152.30" width="1" height="2.30" fill="#5e5e5e"/><rect x="916" y="151.10" width="1" height="3.50" fill="#5e5e5e"/><rect x="922" y="152.30" width="1" height="2.30" fill="#5e5e5e"/><rect x="926.90" y="142.6" width="1.2" height="12" fill="#5c5c5c"/><rect x="932" y="152.30" width="1" height="2.30" fill="#5e5e5e"/><rect x="937" y="151.10" width="1" height="3.50" fill="#5e5e5e"/><rect x="943" y="152.30" width="1" height="2.30" fill="#5e5e5e"/><rect x="948" y="149.60" width="1" height="5.00" fill="#5e5e5e"/><rect x="953" y="152.30" width="1" height="2.30" fill="#5e5e5e"/><rect x="958" y="151.10" width="1" height="3.50" fill="#5e5e5e"/><rect x="964" y="152.30" width="1" height="2.30" fill="#5e5e5e"/><rect x="969" y="147.60" width="1" height="7.00" fill="#5e5e5e"/><rect x="974" y="152.30" width="1" height="2.30" fill="#5e5e5e"/><rect x="979" y="151.10" width="1" height="3.50" fill="#5e5e5e"/><rect x="985" y="152.30" width="1" height="2.30" fill="#5e5e5e"/><rect x="990" y="149.60" width="1" height="5.00" fill="#5e5e5e"/><rect x="995" y="152.30" width="1" height="2.30" fill="#5e5e5e"/><rect x="1000" y="151.10" width="1" height="3.50" fill="#5e5e5e"/><rect x="1006" y="152.30" width="1" height="2.30" fill="#5e5e5e"/><rect x="1010.90" y="142.6" width="1.2" height="12" fill="#5c5c5c"/><rect x="1016" y="152.30" width="1" height="2.30" fill="#5e5e5e"/><rect x="1021" y="151.10" width="1" height="3.50" fill="#5e5e5e"/><rect x="1027" y="152.30" width="1" height="2.30" fill="#5e5e5e"/><rect x="1032" y="149.60" width="1" height="5.00" fill="#5e5e5e"/><rect x="1037" y="152.30" width="1" height="2.30" fill="#5e5e5e"/><rect x="1042" y="151.10" width="1" height="3.50" fill="#5e5e5e"/><rect x="1048" y="152.30" width="1" height="2.30" fill="#5e5e5e"/><rect x="1053" y="147.60" width="1" height="7.00" fill="#5e5e5e"/><rect x="1058" y="152.30" width="1" height="2.30" fill="#5e5e5e"/><rect x="1063" y="151.10" width="1" height="3.50" fill="#5e5e5e"/><rect x="1069" y="152.30" width="1" height="2.30" fill="#5e5e5e"/><rect x="1074" y="149.60" width="1" height="5.00" fill="#5e5e5e"/><rect x="1079" y="152.30" width="1" height="2.30" fill="#5e5e5e"/><rect x="1084" y="151.10" width="1" height="3.50" fill="#5e5e5e"/><rect x="1090" y="152.30" width="1" height="2.30" fill="#5e5e5e"/><rect x="1094.90" y="142.6" width="1.2" height="12" fill="#5c5c5c"/><rect x="1100" y="152.30" width="1" height="2.30" fill="#5e5e5e"/><rect x="1105" y="151.10" width="1" height="3.50" fill="#5e5e5e"/><rect x="1111" y="152.30" width="1" height="2.30" fill="#5e5e5e"/><rect x="1116" y="149.60" width="1" height="5.00" fill="#5e5e5e"/><rect x="1121" y="152.30" width="1" height="2.30" fill="#5e5e5e"/><rect x="1126" y="151.10" width="1" height="3.50" fill="#5e5e5e"/><rect x="1132" y="152.30" width="1" height="2.30" fill="#5e5e5e"/><rect x="1137" y="147.60" width="1" height="7.00" fill="#5e5e5e"/><rect x="1142" y="152.30" width="1" height="2.30" fill="#5e5e5e"/><rect x="1147" y="151.10" width="1" height="3.50" fill="#5e5e5e"/><rect x="1153" y="152.30" width="1" height="2.30" fill="#5e5e5e"/><rect x="1158" y="149.60" width="1" height="5.00" fill="#5e5e5e"/><rect x="1163" y="152.30" width="1" height="2.30" fill="#5e5e5e"/><rect x="1168" y="151.10" width="1" height="3.50" fill="#5e5e5e"/><rect x="1174" y="152.30" width="1" height="2.30" fill="#5e5e5e"/><rect x="1178.90" y="142.6" width="1.2" height="12" fill="#5c5c5c"/><rect x="1184" y="152.30" width="1" height="2.30" fill="#5e5e5e"/><rect x="1189" y="151.10" width="1" height="3.50" fill="#5e5e5e"/><rect x="1195" y="152.30" width="1" height="2.30" fill="#5e5e5e"/><rect x="1200" y="149.60" width="1" height="5.00" fill="#5e5e5e"/><rect x="1205" y="152.30" width="1" height="2.30" fill="#5e5e5e"/><rect x="1210" y="151.10" width="1" height="3.50" fill="#5e5e5e"/><rect x="1216" y="152.30" width="1" height="2.30" fill="#5e5e5e"/><rect x="1221" y="147.60" width="1" height="7.00" fill="#5e5e5e"/><rect x="1226" y="152.30" width="1" height="2.30" fill="#5e5e5e"/><rect x="1231" y="151.10" width="1" height="3.50" fill="#5e5e5e"/><rect x="1237" y="152.30" width="1" height="2.30" fill="#5e5e5e"/><rect x="1242" y="149.60" width="1" height="5.00" fill="#5e5e5e"/><rect x="1247" y="152.30" width="1" height="2.30" fill="#5e5e5e"/><rect x="1252" y="151.10" width="1" height="3.50" fill="#5e5e5e"/><rect x="1258" y="152.30" width="1" height="2.30" fill="#5e5e5e"/><rect x="1262.90" y="142.6" width="1.2" height="12" fill="#5c5c5c"/><text x="173.10" y="149.8">2</text><text x="257.10" y="149.8">1</text><text x="341.10" y="149.8">0</text><text x="425.10" y="149.8">1</text><text x="509.10" y="149.8">2</text><text x="593.10" y="149.8">3</text><text x="677.10" y="149.8">4</text><text x="761.10" y="149.8">5</text><text x="845.10" y="149.8">6</text><text x="929.10" y="149.8">7</text><text x="1013.10" y="149.8">8</text><text x="1097.10" y="149.8">9</text><text x="1181.10" y="149.8">10</text><text x="1265.10" y="149.8">1</text></g></svg>
<svg class="abs" style="left:0;top:0" width="120" height="700" viewBox="0 0 120 700"><g font-family="Liberation Sans, sans-serif" font-size="6.7" font-weight="bold" fill="#4a4a4a"><rect x="104.70" y="160" width="1.70" height="1" fill="#6a6a6a"/><rect x="103.40" y="165" width="3.00" height="1" fill="#6a6a6a"/><rect x="104.70" y="170" width="1.70" height="1" fill="#6a6a6a"/><rect x="102.10" y="176" width="4.30" height="1" fill="#6a6a6a"/><rect x="104.70" y="181" width="1.70" height="1" fill="#6a6a6a"/><rect x="103.40" y="186" width="3.00" height="1" fill="#6a6a6a"/><rect x="104.70" y="191" width="1.70" height="1" fill="#6a6a6a"/><rect x="94.60" y="196.70" width="11.80" height="1.2" fill="#5c5c5c"/><rect x="104.70" y="202" width="1.70" height="1" fill="#6a6a6a"/><rect x="103.40" y="207" width="3.00" height="1" fill="#6a6a6a"/><rect x="104.70" y="212" width="1.70" height="1" fill="#6a6a6a"/><rect x="102.10" y="218" width="4.30" height="1" fill="#6a6a6a"/><rect x="104.70" y="223" width="1.70" height="1" fill="#6a6a6a"/><rect x="103.40" y="228" width="3.00" height="1" fill="#6a6a6a"/><rect x="104.70" y="233" width="1.70" height="1" fill="#6a6a6a"/><rect x="99.40" y="239" width="7.00" height="1" fill="#6a6a6a"/><rect x="104.70" y="244" width="1.70" height="1" fill="#6a6a6a"/><rect x="103.40" y="249" width="3.00" height="1" fill="#6a6a6a"/><rect x="104.70" y="254" width="1.70" height="1" fill="#6a6a6a"/><rect x="102.10" y="260" width="4.30" height="1" fill="#6a6a6a"/><rect x="104.70" y="265" width="1.70" height="1" fill="#6a6a6a"/><rect x="103.40" y="270" width="3.00" height="1" fill="#6a6a6a"/><rect x="104.70" y="275" width="1.70" height="1" fill="#6a6a6a"/><rect x="94.60" y="280.70" width="11.80" height="1.2" fill="#5c5c5c"/><rect x="104.70" y="286" width="1.70" height="1" fill="#6a6a6a"/><rect x="103.40" y="291" width="3.00" height="1" fill="#6a6a6a"/><rect x="104.70" y="296" width="1.70" height="1" fill="#6a6a6a"/><rect x="102.10" y="302" width="4.30" height="1" fill="#6a6a6a"/><rect x="104.70" y="307" width="1.70" height="1" fill="#6a6a6a"/><rect x="103.40" y="312" width="3.00" height="1" fill="#6a6a6a"/><rect x="104.70" y="317" width="1.70" height="1" fill="#6a6a6a"/><rect x="99.40" y="323" width="7.00" height="1" fill="#6a6a6a"/><rect x="104.70" y="328" width="1.70" height="1" fill="#6a6a6a"/><rect x="103.40" y="333" width="3.00" height="1" fill="#6a6a6a"/><rect x="104.70" y="338" width="1.70" height="1" fill="#6a6a6a"/><rect x="102.10" y="344" width="4.30" height="1" fill="#6a6a6a"/><rect x="104.70" y="349" width="1.70" height="1" fill="#6a6a6a"/><rect x="103.40" y="354" width="3.00" height="1" fill="#6a6a6a"/><rect x="104.70" y="359" width="1.70" height="1" fill="#6a6a6a"/><rect x="94.60" y="364.70" width="11.80" height="1.2" fill="#5c5c5c"/><rect x="104.70" y="370" width="1.70" height="1" fill="#6a6a6a"/><rect x="103.40" y="375" width="3.00" height="1" fill="#6a6a6a"/><rect x="104.70" y="380" width="1.70" height="1" fill="#6a6a6a"/><rect x="102.10" y="386" width="4.30" height="1" fill="#6a6a6a"/><rect x="104.70" y="391" width="1.70" height="1" fill="#6a6a6a"/><rect x="103.40" y="396" width="3.00" height="1" fill="#6a6a6a"/><rect x="104.70" y="401" width="1.70" height="1" fill="#6a6a6a"/><rect x="99.40" y="407" width="7.00" height="1" fill="#6a6a6a"/><rect x="104.70" y="412" width="1.70" height="1" fill="#6a6a6a"/><rect x="103.40" y="417" width="3.00" height="1" fill="#6a6a6a"/><rect x="104.70" y="422" width="1.70" height="1" fill="#6a6a6a"/><rect x="102.10" y="428" width="4.30" height="1" fill="#6a6a6a"/><rect x="104.70" y="433" width="1.70" height="1" fill="#6a6a6a"/><rect x="103.40" y="438" width="3.00" height="1" fill="#6a6a6a"/><rect x="104.70" y="443" width="1.70" height="1" fill="#6a6a6a"/><rect x="94.60" y="448.70" width="11.80" height="1.2" fill="#5c5c5c"/><rect x="104.70" y="454" width="1.70" height="1" fill="#6a6a6a"/><rect x="103.40" y="459" width="3.00" height="1" fill="#6a6a6a"/><rect x="104.70" y="464" width="1.70" height="1" fill="#6a6a6a"/><rect x="102.10" y="470" width="4.30" height="1" fill="#6a6a6a"/><rect x="104.70" y="475" width="1.70" height="1" fill="#6a6a6a"/><rect x="103.40" y="480" width="3.00" height="1" fill="#6a6a6a"/><rect x="104.70" y="485" width="1.70" height="1" fill="#6a6a6a"/><rect x="99.40" y="491" width="7.00" height="1" fill="#6a6a6a"/><rect x="104.70" y="496" width="1.70" height="1" fill="#6a6a6a"/><rect x="103.40" y="501" width="3.00" height="1" fill="#6a6a6a"/><rect x="104.70" y="506" width="1.70" height="1" fill="#6a6a6a"/><rect x="102.10" y="512" width="4.30" height="1" fill="#6a6a6a"/><rect x="104.70" y="517" width="1.70" height="1" fill="#6a6a6a"/><rect x="103.40" y="522" width="3.00" height="1" fill="#6a6a6a"/><rect x="104.70" y="527" width="1.70" height="1" fill="#6a6a6a"/><rect x="94.60" y="532.70" width="11.80" height="1.2" fill="#5c5c5c"/><rect x="104.70" y="538" width="1.70" height="1" fill="#6a6a6a"/><rect x="103.40" y="543" width="3.00" height="1" fill="#6a6a6a"/><rect x="104.70" y="548" width="1.70" height="1" fill="#6a6a6a"/><rect x="102.10" y="554" width="4.30" height="1" fill="#6a6a6a"/><rect x="104.70" y="559" width="1.70" height="1" fill="#6a6a6a"/><rect x="103.40" y="564" width="3.00" height="1" fill="#6a6a6a"/><rect x="104.70" y="569" width="1.70" height="1" fill="#6a6a6a"/><rect x="99.40" y="575" width="7.00" height="1" fill="#6a6a6a"/><rect x="104.70" y="580" width="1.70" height="1" fill="#6a6a6a"/><rect x="103.40" y="585" width="3.00" height="1" fill="#6a6a6a"/><rect x="104.70" y="590" width="1.70" height="1" fill="#6a6a6a"/><rect x="102.10" y="596" width="4.30" height="1" fill="#6a6a6a"/><rect x="104.70" y="601" width="1.70" height="1" fill="#6a6a6a"/><rect x="103.40" y="606" width="3.00" height="1" fill="#6a6a6a"/><rect x="104.70" y="611" width="1.70" height="1" fill="#6a6a6a"/><rect x="94.60" y="616.70" width="11.80" height="1.2" fill="#5c5c5c"/><rect x="104.70" y="622" width="1.70" height="1" fill="#6a6a6a"/><rect x="103.40" y="627" width="3.00" height="1" fill="#6a6a6a"/><rect x="104.70" y="632" width="1.70" height="1" fill="#6a6a6a"/><rect x="102.10" y="638" width="4.30" height="1" fill="#6a6a6a"/><rect x="104.70" y="643" width="1.70" height="1" fill="#6a6a6a"/><rect x="103.40" y="648" width="3.00" height="1" fill="#6a6a6a"/><rect x="104.70" y="653" width="1.70" height="1" fill="#6a6a6a"/><rect x="99.40" y="659" width="7.00" height="1" fill="#6a6a6a"/><rect x="104.70" y="664" width="1.70" height="1" fill="#6a6a6a"/><rect x="103.40" y="669" width="3.00" height="1" fill="#6a6a6a"/><rect x="104.70" y="674" width="1.70" height="1" fill="#6a6a6a"/><rect x="102.10" y="680" width="4.30" height="1" fill="#6a6a6a"/><rect x="104.70" y="685" width="1.70" height="1" fill="#6a6a6a"/><rect x="103.40" y="690" width="3.00" height="1" fill="#6a6a6a"/><text x="95.8" y="204.90">0</text><text x="95.8" y="288.90">1</text><text x="95.8" y="372.90">2</text><text x="95.8" y="456.90">3</text><text x="95.8" y="540.90">4</text><text x="95.8" y="624.90">5</text></g></svg>

<svg class="abs" style="left:1268.5px;top:143.6px" width="12" height="8" viewBox="0 0 12 8"><path d="M6 1.3 L9.3 6 H2.7Z" fill="#555" stroke="#555" stroke-width=".6" stroke-linejoin="round"/></svg>
<div class="abs" style="left:1271.5px;top:229px;width:5.5px;height:189px;background:#666;border-radius:3px"></div>
<svg class="abs" style="left:1268px;top:656px" width="12" height="36" viewBox="0 0 12 36">
<path d="M3.4 6.8 H9.4 L6.4 10.6Z" fill="#555" stroke="#555" stroke-width=".5" stroke-linejoin="round"/>
<path d="M4.9 19.4 L6.4 17.3 L7.9 19.4Z M4.9 21.7 L6.4 19.6 L7.9 21.7Z" fill="#4a4a4a"/>
<path d="M4.9 29.1 H7.9 V29.9 H4.9Z M4.9 30.4 L6.4 32.9 L7.9 30.4Z" fill="#4a4a4a"/>
</svg>
<svg class="abs" style="left:93.8px;top:693.7px" width="10" height="10" viewBox="0 0 10 10"><path d="M2.8 5 L7 2.3 V7.7Z" fill="#555" stroke="#555" stroke-width=".5" stroke-linejoin="round"/></svg>
<svg class="abs" style="left:1258px;top:693.7px" width="10" height="10" viewBox="0 0 10 10"><path d="M7.2 5 L3 2.3 V7.7Z" fill="#555" stroke="#555" stroke-width=".5" stroke-linejoin="round"/></svg>
<div class="abs" style="left:313.5px;top:695.8px;width:716.2px;height:5.9px;background:#666;border-radius:3px"></div>


<div class="abs" style="left:0;top:704px;width:1280px;height:16px;background:#f0f0f0"></div>
<div class="abs" style="left:0;top:718.6px;width:1280px;height:1.4px;background:#2a2a2a"></div>
<div class="t" style="left:7.85px;top:706px;line-height:12px;font-size:7.7px;color:#333;letter-spacing:-0.118px;">Page: 1 of 1</div>
<div class="abs" style="left:60.5px;top:706.5px;width:9.5px;height:9.5px;border-radius:50%;background:#222"></div>
<div class="t" style="left:74.60px;top:706px;line-height:12px;font-size:7.7px;color:#333;letter-spacing:-0.118px;">3.59, 0.79 in.</div>
<svg class="abs" style="left:131px;top:706px" width="12" height="10" viewBox="0 0 12 10"><rect x="1.2" y="1.2" width="8.6" height="7" fill="#fff" stroke="#222" stroke-width="1.2"/><rect x="2.6" y="2.4" width="5.8" height="2.6" fill="#222"/></svg>
<div class="t" style="left:145.85px;top:706px;line-height:12px;font-size:7.7px;color:#333;letter-spacing:0.000px;">3.41 x 2.98 in.</div>
<div class="abs" style="left:1091px;top:704px;width:26px;height:14px;background:#e2e2e2"></div>
<svg class="abs" style="left:1098px;top:705.5px" width="12" height="12" viewBox="0 0 12 12" fill="none" stroke="#444" stroke-width="1"><rect x="1.5" y="1" width="8.5" height="10"/><path d="M3.5 3.5 H8 M5.5 5.5 H8 M5.5 7.5 H8 M3.5 9 H8" stroke-width=".8"/></svg>
<svg class="abs" style="left:1124px;top:705.5px" width="13" height="12" viewBox="0 0 13 12" fill="none" stroke="#444" stroke-width="1"><path d="M1.5 1.5 H6.5 V10.5 H1.5Z M6.5 1.5 H11.5 V10.5 H6.5Z"/><path d="M3 4 H5 M3 6 H5 M3 8 H5 M8 4 H10 M8 6 H10 M8 8 H10" stroke-width=".8"/></svg>
<div class="abs" style="left:1148px;top:711px;width:5px;height:1px;background:#555"></div>
<div class="abs" style="left:1157px;top:711px;width:66px;height:1px;background:#8a8a8a"></div>
<div class="abs" style="left:1190px;top:707px;width:2.6px;height:8.5px;background:#444;border-radius:1px"></div>
<div class="abs" style="left:1226.5px;top:711px;width:5px;height:1px;background:#555"></div>
<div class="abs" style="left:1228.5px;top:709px;width:1px;height:5px;background:#555"></div>
<div class="t" style="left:1240.85px;top:706px;line-height:12px;font-size:7.7px;color:#333;letter-spacing:-0.343px;">131%</div>
<svg class="abs" style="left:1266px;top:706px" width="11" height="11" viewBox="0 0 11 11" fill="none" stroke="#444" stroke-width="1"><rect x="3.5" y="3.5" width="4" height="4"/><path d="M5.5 0.6 V3 M5.5 8 V10.4 M0.6 5.5 H3 M8 5.5 H10.4 M4.2 1.8 L5.5 0.6 L6.8 1.8 M4.2 9.2 L5.5 10.4 L6.8 9.2 M1.8 4.2 L0.6 5.5 L1.8 6.8 M9.2 4.2 L10.4 5.5 L9.2 6.8" stroke-width=".8"/></svg>

<div class="abs" style="left:13.1px;top:59.2px;width:174.9px;height:403.2px;background:#fff;border-style:solid;border-width:1.4px 1.8px 1.4px 1.2px;border-color:#a2a2a2 #9a9a9a #8c8c8c #6c6c6c;border-radius:3.5px;box-shadow:0.5px 1.5px 5px rgba(0,0,0,.3)"></div>
<div class="abs" style="left:15.6px;top:111.8px;width:158.6px;height:1px;background:#e1e1e1"></div>
<div class="abs" style="left:15.6px;top:151.3px;width:158.6px;height:1px;background:#e1e1e1"></div>
<div class="abs" style="left:15.6px;top:217.7px;width:158.6px;height:1px;background:#e1e1e1"></div>
<div class="abs" style="left:15.6px;top:283.4px;width:158.6px;height:1px;background:#e1e1e1"></div>
<div class="abs" style="left:15.6px;top:349.2px;width:158.6px;height:1px;background:#e1e1e1"></div>
<div class="abs" style="left:15.6px;top:402.1px;width:158.6px;height:1px;background:#e1e1e1"></div>
<div class="t" style="left:24.00px;top:65px;line-height:12px;font-size:8.2px;color:#161616;font-weight:bold;letter-spacing:-0.301px;-webkit-text-stroke:0.3px #161616;">Recently Used Shapes</div>
<div class="t" style="left:24.00px;top:118px;line-height:12px;font-size:8.2px;color:#161616;font-weight:bold;letter-spacing:-0.458px;-webkit-text-stroke:0.3px #161616;">Lines</div>
<div class="t" style="left:24.00px;top:157px;line-height:12px;font-size:8.2px;color:#161616;font-weight:bold;letter-spacing:-0.521px;-webkit-text-stroke:0.3px #161616;">Basic Shapes</div>
<div class="t" style="left:24.00px;top:223px;line-height:12px;font-size:8.2px;color:#161616;font-weight:bold;letter-spacing:-0.257px;-webkit-text-stroke:0.3px #161616;">Block Arrows</div>
<div class="t" style="left:24.00px;top:289px;line-height:12px;font-size:8.2px;color:#161616;font-weight:bold;letter-spacing:-0.197px;-webkit-text-stroke:0.3px #161616;">Flowchart</div>
<div class="t" style="left:23.80px;top:355px;line-height:12px;font-size:8.2px;color:#161616;font-weight:bold;letter-spacing:-0.377px;-webkit-text-stroke:0.3px #161616;">Callouts</div>
<div class="t" style="left:24.00px;top:408px;line-height:12px;font-size:8.2px;color:#161616;font-weight:bold;letter-spacing:-0.351px;-webkit-text-stroke:0.3px #161616;">Stars and Banners</div>
<svg class="abs" style="left:0;top:0" width="200" height="470" viewBox="0 0 200 470" fill="none" stroke="#363636" stroke-width="1.12" stroke-linejoin="round" stroke-linecap="round"><g transform="translate(21.70,86.1) scale(0.92)"><circle r="5.3"/><path d="M-1.66,-3.08A3.5,3.5 0 0 1 3.08,1.66ZM1.66,3.08A3.5,3.5 0 0 1 -3.08,-1.66Z" stroke-width=".85"/></g><g transform="translate(35.00,86.1) scale(0.92)"><rect x="-5" y="-4.4" width="10" height="8.8" fill="#f6f9fc" stroke="#5d84ae" stroke-width="1.7"/><text x="0" y="2.3" font-size="6.2" font-weight="bold" text-anchor="middle" fill="#3f7fc4" stroke="none" font-family="Liberation Sans, sans-serif">A</text></g><g transform="translate(48.30,86.1) scale(0.92)"><path d="M-5.2,-5L5.2,5"/></g><g transform="translate(61.60,86.1) scale(0.92)"><path d="M-5.2,-5L4.4,4.2"/><path d="M5.40,5.20L2.06,4.35L4.42,1.90Z" fill="#363636" stroke-width=".3"/></g><g transform="translate(74.90,86.1) scale(0.92)"><path d="M-5.2,-3.9H5.2V3.9H-5.2Z"/></g><g transform="translate(88.20,86.1) scale(0.92)"><ellipse rx="5.4" ry="3.9"/></g><g transform="translate(101.50,86.1) scale(0.92)"><rect x="-5.2" y="-3.9" width="10.4" height="7.8" rx="1.6"/></g><g transform="translate(114.80,86.1) scale(0.92)"><path d="M0,-4.7L5,5H-5Z"/></g><g transform="translate(128.10,86.1) scale(0.92)"><path d="M-4.8,-4.6H-0.6V4.6H4.6"/></g><g transform="translate(141.40,86.1) scale(0.92)"><path d="M-4.8,-4.6H-0.6V3.4H3.2"/><path d="M2.6,1.4L5.2,3.4L2.6,5.4Z" fill="#363636" stroke-width=".4"/></g><g transform="translate(154.70,86.1) scale(0.92)"><path d="M-5.3,-2.2H0.4V-4.7L5.3,0L0.4,4.7V2.2H-5.3Z"/></g><g transform="translate(168.00,86.1) scale(0.92)"><g transform="rotate(90)"><path d="M-5.3,-2.2H0.4V-4.7L5.3,0L0.4,4.7V2.2H-5.3Z"/></g></g><g transform="translate(21.70,99.6) scale(0.92)"><path d="M-5,-4.4H1.8Q0.4,-1.4 3,-1.2Q5.3,-0.6 5.3,2Q5.2,4.8 2.4,4.8H-5Z"/></g><g transform="translate(35.00,99.6) scale(0.92)"><path d="M-4.8,-4.2Q-4.2,-1 -2.8,0.6Q2,-0.6 4.2,-3.6Q1,-4.8 -1,-1.6Q-2.6,1.8 0.6,2.2Q3.6,2.4 4.8,3.8Q3.6,5.4 2,4.6"/></g><g transform="translate(48.30,99.6) scale(0.92)"><path d="M-4.8,-4.2Q4.2,-4.4 4.8,4.8"/></g><g transform="translate(61.60,99.6) scale(0.92)"><path d="M-5,-0.4Q-2.6,-6.4 0,0Q2.4,5 5.2,4.4"/></g><g transform="translate(74.90,99.6) scale(0.92)"><path d="M1.6,-5Q-0.4,-5 -0.4,-3.4V-1.6Q-0.4,0 -2,0Q-0.4,0 -0.4,1.6V3.4Q-0.4,5 1.6,5"/></g><g transform="translate(88.20,99.6) scale(0.92)"><g transform="scale(-1,1)"><path d="M1.6,-5Q-0.4,-5 -0.4,-3.4V-1.6Q-0.4,0 -2,0Q-0.4,0 -0.4,1.6V3.4Q-0.4,5 1.6,5"/></g></g><g transform="translate(21.70,139.2) scale(0.92)"><path d="M-5.2,-5L5.2,5"/></g><g transform="translate(35.00,139.2) scale(0.92)"><path d="M-5.2,-5L4.4,4.2"/><path d="M5.40,5.20L2.06,4.35L4.42,1.90Z" fill="#363636" stroke-width=".3"/></g><g transform="translate(48.30,139.2) scale(0.92)"><path d="M-4.4,-4.2L4.4,4.2"/><path d="M5.40,5.20L2.06,4.35L4.42,1.90ZM-5.40,-5.20L-2.06,-4.35L-4.42,-1.90Z" fill="#363636" stroke-width=".3"/></g><g transform="translate(61.60,139.2) scale(0.92)"><path d="M-4.8,-4.6H-0.6V4.6H4.6"/></g><g transform="translate(74.90,139.2) scale(0.92)"><path d="M-4.8,-4.6H-0.6V3.4H3.2"/><path d="M2.6,1.4L5.2,3.4L2.6,5.4Z" fill="#363636" stroke-width=".4"/></g><g transform="translate(88.20,139.2) scale(0.92)"><path d="M-2.6,-3.4H-0.2V3.4H3.2"/><path d="M2.6,1.4L5.2,3.4L2.6,5.4Z M-2.4,-5.4L-5,-3.4L-2.4,-1.4Z" fill="#363636" stroke-width=".4"/></g><g transform="translate(101.50,139.2) scale(0.92)"><path d="M-3.4,-4.6H-0.6Q2.6,-4.4 0,0Q-2.6,4.4 0.6,4.6H3.4"/></g><g transform="translate(114.80,139.2) scale(0.92)"><path d="M-3.4,-4.6H-0.6Q2.6,-4.4 0,-0.4Q-2.2,3.4 0.6,3.6H2.6"/><path d="M2.2,1.8L4.6,3.6L2.2,5.4Z" fill="#363636" stroke-width=".4"/></g><g transform="translate(128.10,139.2) scale(0.92)"><path d="M-1.2,-3.6H-0.6Q2.6,-3.4 0,0Q-2.2,3.4 0.6,3.6H2.6"/><path d="M2.2,1.8L4.6,3.6L2.2,5.4Z M-1.8,-5.4L-4.2,-3.6L-1.8,-1.8Z" fill="#363636" stroke-width=".4"/></g><g transform="translate(141.40,139.2) scale(0.92)"><path d="M-5,-0.4Q-2.6,-6.4 0,0Q2.4,5 5.2,4.4"/></g><g transform="translate(154.70,139.2) scale(0.92)"><path d="M-5,-4.4H1.8Q0.4,-1.4 3,-1.2Q5.3,-0.6 5.3,2Q5.2,4.8 2.4,4.8H-5Z"/></g><g transform="translate(168.00,139.2) scale(0.92)"><path d="M-4.8,-4.2Q-4.2,-1 -2.8,0.6Q2,-0.6 4.2,-3.6Q1,-4.8 -1,-1.6Q-2.6,1.8 0.6,2.2Q3.6,2.4 4.8,3.8Q3.6,5.4 2,4.6"/></g><g transform="translate(21.70,178.2) scale(0.92)"><rect x="-5" y="-4.4" width="10" height="8.8" fill="#f6f9fc" stroke="#5d84ae" stroke-width="1.7"/><text x="0" y="2.3" font-size="6.2" font-weight="bold" text-anchor="middle" fill="#3f7fc4" stroke="none" font-family="Liberation Sans, sans-serif">A</text></g><g transform="translate(35.00,178.2) scale(0.92)"><path d="M-5.2,-3.9H5.2V3.9H-5.2Z"/></g><g transform="translate(48.30,178.2) scale(0.92)"><path d="M-1.8,-4.6H5.3L1.8,4.6H-5.3Z"/></g><g transform="translate(61.60,178.2) scale(0.92)"><path d="M-5.3,-4.4H5.3L2.5,4.4H-2.5Z"/></g><g transform="translate(74.90,178.2) scale(0.92)"><path d="M0,-5L5.3,0L0,5L-5.3,0Z"/></g><g transform="translate(88.20,178.2) scale(0.92)"><rect x="-5.2" y="-3.9" width="10.4" height="7.8" rx="1.6"/></g><g transform="translate(101.50,178.2) scale(0.92)"><path d="M2.10,-5.08L5.08,-2.10L5.08,2.10L2.10,5.08L-2.10,5.08L-5.08,2.10L-5.08,-2.10L-2.10,-5.08Z"/><text x="0" y="1.5" font-size="4.2" text-anchor="middle" fill="#4a4a4a" stroke="none" font-family="Liberation Sans, sans-serif">8</text></g><g transform="translate(114.80,178.2) scale(0.92)"><path d="M0,-4.7L5,5H-5Z"/></g><g transform="translate(128.10,178.2) scale(0.92)"><path d="M-4.8,-4.8V5H5Z"/></g><g transform="translate(141.40,178.2) scale(0.92)"><ellipse rx="5.4" ry="3.9"/></g><g transform="translate(154.70,178.2) scale(0.92)"><path d="M-2.8,-4.4H2.8L5.4,0L2.8,4.4H-2.8L-5.4,0Z"/></g><g transform="translate(168.00,178.2) scale(0.92)"><path d="M-1.8,-5.2H1.8V-1.8H5.2V1.8H1.8V5.2H-1.8V1.8H-5.2V-1.8H-1.8Z"/></g><g transform="translate(21.70,191.8) scale(0.92)"><path d="M0.00,-5.40L5.14,-1.67L3.17,4.37L-3.17,4.37L-5.14,-1.67Z"/></g><g transform="translate(35.00,191.8) scale(0.92)"><path d="M-4.2,-3.6V3.6A4.2,1.6 0 0 0 4.2,3.6V-3.6A4.2,1.6 0 0 0 -4.2,-3.6A4.2,1.6 0 0 0 4.2,-3.6"/></g><g transform="translate(48.30,191.8) scale(0.92)"><path d="M-5,-2.4H2.4V5H-5ZM-5,-2.4L-2.4,-5H5L2.4,-2.4M5,-5V2.4L2.4,5"/></g><g transform="translate(61.60,191.8) scale(0.92)"><path d="M-5,-5H5V5H-5ZM-3,-3H3V3H-3Z"/><path d="M-5,-5L-3,-3M5,-5L3,-3M5,5L3,3M-5,5L-3,3" stroke-width=".6"/></g><g transform="translate(74.90,191.8) scale(0.92)"><path d="M-5,-5H5V2L2,5H-5ZM5,2Q3,2.4 2.6,2.2Q2.8,3.6 2,5"/></g><g transform="translate(88.20,191.8) scale(0.92)"><circle r="5.2"/><path d="M-2.6,1.4Q0,4.2 2.6,1.4"/><circle cx="-1.8" cy="-1.6" r=".7" fill="#3c3c3c" stroke="none"/><circle cx="1.8" cy="-1.6" r=".7" fill="#3c3c3c" stroke="none"/></g><g transform="translate(101.50,191.8) scale(0.92)"><circle r="5.2"/><circle r="2.7"/></g><g transform="translate(114.80,191.8) scale(0.92)"><circle r="5.3"/><path d="M-1.66,-3.08A3.5,3.5 0 0 1 3.08,1.66ZM1.66,3.08A3.5,3.5 0 0 1 -3.08,-1.66Z" stroke-width=".85"/></g><g transform="translate(128.10,191.8) scale(0.92)"><path d="M-5.3,2.6A5.3,5.3 0 0 1 5.3,2.6H2.6A2.7,2.7 0 0 0 -2.6,2.6Z" transform="translate(0,0.6)"/></g><g transform="translate(141.40,191.8) scale(0.92)"><path d="M0,-2.6Q-1,-5 -3.2,-4.6Q-5.6,-3.8 -5,-1.2Q-4,2 0,5Q4,2 5,-1.2Q5.6,-3.8 3.2,-4.6Q1,-5 0,-2.6Z"/></g><g transform="translate(154.70,191.8) scale(0.92)"><path d="M-1.8,-5.2L-3.6,-2.4L-1.6,-1.6L-2.6,0.2L-0.6,1L2.6,5.4L1.4,0.6L3,0L1.4,-2L2.6,-2.8Z"/></g><g transform="translate(168.00,191.8) scale(0.92)"><circle r="2.5"/><path d="M3.90,0.00L5.50,0.00M2.76,2.76L3.89,3.89M0.00,3.90L0.00,5.50M-2.76,2.76L-3.89,3.89M-3.90,0.00L-5.50,0.00M-2.76,-2.76L-3.89,-3.89M-0.00,-3.90L-0.00,-5.50M2.76,-2.76L3.89,-3.89" stroke-width="1.3" stroke-linecap="butt"/></g><g transform="translate(21.70,205) scale(0.92)"><path d="M2.6,-5.2A5.4,5.4 0 1 0 2.6,5.2A6.6,6.6 0 0 1 2.6,-5.2Z"/></g><g transform="translate(35.00,205) scale(0.92)"><path d="M-4.8,-4.2Q4.2,-4.4 4.8,4.8"/></g><g transform="translate(48.30,205) scale(0.92)"><path d="M-2.6,-5Q-4.8,-5 -4.8,-3V3Q-4.8,5 -2.6,5M2.6,-5Q4.8,-5 4.8,-3V3Q4.8,5 2.6,5"/></g><g transform="translate(61.60,205) scale(0.92)"><path d="M-1.8,-5Q-3.4,-5 -3.4,-3.4V-1.6Q-3.4,0 -5,0Q-3.4,0 -3.4,1.6V3.4Q-3.4,5 -1.8,5M1.8,-5Q3.4,-5 3.4,-3.4V-1.6Q3.4,0 5,0Q3.4,0 3.4,1.6V3.4Q3.4,5 1.8,5"/></g><g transform="translate(74.90,205) scale(0.92)"><path d="M-3,-5H3A2,2 0 0 0 5,-3V3A2,2 0 0 0 3,5H-3A2,2 0 0 0 -5,3V-3A2,2 0 0 0 -3,-5Z"/></g><g transform="translate(88.20,205) scale(0.92)"><path d="M1.6,-5H0Q-1.4,-5 -1.4,-3.6V3.6Q-1.4,5 0,5H1.6"/></g><g transform="translate(101.50,205) scale(0.92)"><g transform="scale(-1,1)"><path d="M1.6,-5H0Q-1.4,-5 -1.4,-3.6V3.6Q-1.4,5 0,5H1.6"/></g></g><g transform="translate(114.80,205) scale(0.92)"><path d="M1.6,-5Q-0.4,-5 -0.4,-3.4V-1.6Q-0.4,0 -2,0Q-0.4,0 -0.4,1.6V3.4Q-0.4,5 1.6,5"/></g><g transform="translate(128.10,205) scale(0.92)"><g transform="scale(-1,1)"><path d="M1.6,-5Q-0.4,-5 -0.4,-3.4V-1.6Q-0.4,0 -2,0Q-0.4,0 -0.4,1.6V3.4Q-0.4,5 1.6,5"/></g></g><g transform="translate(21.70,244.6) scale(0.92)"><path d="M-5.3,-2.2H0.4V-4.7L5.3,0L0.4,4.7V2.2H-5.3Z"/></g><g transform="translate(35.00,244.6) scale(0.92)"><path d="M5.3,-2.2H-0.4V-4.7L-5.3,0L-0.4,4.7V2.2H5.3Z"/></g><g transform="translate(48.30,244.6) scale(0.92)"><g transform="rotate(-90)"><path d="M-5.3,-2.2H0.4V-4.7L5.3,0L0.4,4.7V2.2H-5.3Z"/></g></g><g transform="translate(61.60,244.6) scale(0.92)"><g transform="rotate(90)"><path d="M-5.3,-2.2H0.4V-4.7L5.3,0L0.4,4.7V2.2H-5.3Z"/></g></g><g transform="translate(74.90,244.6) scale(0.92)"><path d="M-5.4,0L-2.4,-3.2V-1.5H2.4V-3.2L5.4,0L2.4,3.2V1.5H-2.4V3.2Z"/></g><g transform="translate(88.20,244.6) scale(0.92)"><g transform="rotate(90)"><path d="M-5.4,0L-2.4,-3.2V-1.5H2.4V-3.2L5.4,0L2.4,3.2V1.5H-2.4V3.2Z"/></g></g><g transform="translate(101.50,244.6) scale(0.92)"><path d="M0,-5.5L1.8,-3.6H1V-1H3.6V-1.8L5.5,0L3.6,1.8V1H1V3.6H1.8L0,5.5L-1.8,3.6H-1V1H-3.6V1.8L-5.5,0L-3.6,-1.8V-1H-1V-3.6H-1.8Z"/></g><g transform="translate(114.80,244.6) scale(0.92)"><path d="M0,-5L2.2,-2.8H0.9V1.3H3.3V0.1L5.4,2.3L3.3,4.5V3.3H-3.3V4.5L-5.4,2.3L-3.3,0.1V1.3H-0.9V-2.8H-2.2Z"/></g><g transform="translate(128.10,244.6) scale(0.92)"><path d="M-5,5.2V-0.4Q-5,-3.7 -1.8,-3.7H1.4V-5.4L5.2,-2.5L1.4,0.4V-1.3H-1.6Q-2.6,-1.3 -2.6,-0.3V5.2Z"/></g><g transform="translate(141.40,244.6) scale(0.92)"><path d="M-5,5.2V-1.2Q-5,-5.2 -1.1,-5.2Q2.8,-5.2 2.8,-1.2V0.6H4.8L1.7,4.2L-1.4,0.6H0.5V-1.2Q0.5,-2.9 -1.1,-2.9Q-2.7,-2.9 -2.7,-1.2V5.2Z"/></g><g transform="translate(154.70,244.6) scale(0.92)"><path d="M-5.4,2.6L-2.6,-0.2V1.5H1.6V-2.6H-0.1L2.7,-5.4L5.5,-2.6H3.8V3.7H-2.6V5.4Z"/></g><g transform="translate(168.00,244.6) scale(0.92)"><path d="M-5.2,1.5H1.6V-2.6H-0.1L2.7,-5.4L5.5,-2.6H3.8V3.7H-5.2Z"/></g><g transform="translate(21.70,257.8) scale(0.92)"><path d="M1.8,-5.2Q-5.2,-4.6 -5.2,-0.2Q-5.2,3.8 1.2,4.4V5.6L5.2,3.2L1.2,0.8V2.2Q-2.8,1.8 -2.8,-0.6Q-2.6,-2.8 1.8,-3Z"/></g><g transform="translate(35.00,257.8) scale(0.92)"><g transform="scale(-1,1)"><path d="M1.8,-5.2Q-5.2,-4.6 -5.2,-0.2Q-5.2,3.8 1.2,4.4V5.6L5.2,3.2L1.2,0.8V2.2Q-2.8,1.8 -2.8,-0.6Q-2.6,-2.8 1.8,-3Z"/></g></g><g transform="translate(48.30,257.8) scale(0.92)"><g transform="rotate(90)"><g transform="scale(-1,1)"><path d="M1.8,-5.2Q-5.2,-4.6 -5.2,-0.2Q-5.2,3.8 1.2,4.4V5.6L5.2,3.2L1.2,0.8V2.2Q-2.8,1.8 -2.8,-0.6Q-2.6,-2.8 1.8,-3Z"/></g></g></g><g transform="translate(61.60,257.8) scale(0.92)"><g transform="rotate(90)"><path d="M1.8,-5.2Q-5.2,-4.6 -5.2,-0.2Q-5.2,3.8 1.2,4.4V5.6L5.2,3.2L1.2,0.8V2.2Q-2.8,1.8 -2.8,-0.6Q-2.6,-2.8 1.8,-3Z"/></g></g><g transform="translate(74.90,257.8) scale(0.92)"><path d="M-2.4,-2.2H0.4V-4.7L5.3,0L0.4,4.7V2.2H-2.4ZM-5.2,-2.2V2.2M-3.9,-2.2V2.2"/></g><g transform="translate(88.20,257.8) scale(0.92)"><path d="M-5.3,-2.2H0.4V-4.7L5.3,0L0.4,4.7V2.2H-5.3L-3.4,0Z"/></g><g transform="translate(101.50,257.8) scale(0.92)"><path d="M-5.2,-4.2H1.4L5.3,0L1.4,4.2H-5.2Z"/></g><g transform="translate(114.80,257.8) scale(0.92)"><path d="M-5.2,-4.2H1.2L5.3,0L1.2,4.2H-5.2L-1.4,0Z"/></g><g transform="translate(128.10,257.8) scale(0.92)"><path d="M-5.2,-4.8H0.2V-1.3H2V-3L5.4,0L2,3V1.3H0.2V4.8H-5.2Z"/></g><g transform="translate(141.40,257.8) scale(0.92)"><path d="M-4.8,-5.2H4.8V0.2H1.3V2H3L0,5.4L-3,2H-1.3V0.2H-4.8Z"/></g><g transform="translate(154.70,257.8) scale(0.92)"><g transform="scale(-1,1)"><path d="M-5.2,-4.8H0.2V-1.3H2V-3L5.4,0L2,3V1.3H0.2V4.8H-5.2Z"/></g></g><g transform="translate(168.00,257.8) scale(0.92)"><g transform="scale(1,-1)"><path d="M-4.8,-5.2H4.8V0.2H1.3V2H3L0,5.4L-3,2H-1.3V0.2H-4.8Z"/></g></g><g transform="translate(21.70,271.2) scale(0.92)"><path d="M-2.2,-4.6H2.2V-1.2H3.3V-2.6L5.5,0L3.3,2.6V1.2H2.2V4.6H-2.2V1.2H-3.3V2.6L-5.5,0L-3.3,-2.6V-1.2H-2.2Z"/></g><g transform="translate(35.00,271.2) scale(0.92)"><path d="M0,-5.6L1.7,-3H2.8V-1.7L5.6,0L2.8,1.7V3H1.7L0,5.6L-1.7,3H-2.8V1.7L-5.6,0L-2.8,-1.7V-3H-1.7Z"/></g><g transform="translate(48.30,271.2) scale(0.92)"><path d="M-5,4.8V0Q-5,-5.2 -0.4,-5.2Q4.2,-5.2 4.4,0.4H5.6L3.3,4L1,0.4H2.2Q2,-2.8 -0.4,-2.8Q-2.6,-2.8 -2.6,0V4.8Z"/></g><g transform="translate(21.70,310.4) scale(0.92)"><path d="M-5.2,-3.7H5.2V3.7H-5.2Z"/></g><g transform="translate(35.00,310.4) scale(0.92)"><rect x="-5.2" y="-3.7" width="10.4" height="7.4" rx="1.6"/></g><g transform="translate(48.30,310.4) scale(0.92)"><path d="M0,-3.6L5.4,0L0,3.6L-5.4,0Z"/></g><g transform="translate(61.60,310.4) scale(0.92)"><path d="M-2.8,-4.2H5.3L2.8,4.2H-5.3Z"/></g><g transform="translate(74.90,310.4) scale(0.92)"><path d="M-5,-4.8H5V4.8H-5ZM-3,-4.8V4.8M3,-4.8V4.8"/></g><g transform="translate(88.20,310.4) scale(0.92)"><path d="M-5,-4.8H5V4.8H-5ZM-3.2,-4.8V4.8M-5,-3H5"/><rect x="-5" y="-4.8" width="1.8" height="9.6" fill="#bbb" stroke="none" opacity=".5"/></g><g transform="translate(101.50,310.4) scale(0.92)"><path d="M-5,-4.6H5V3Q3.4,5 0,4.6Q-3.6,4.2 -5,3Z"/></g><g transform="translate(114.80,310.4) scale(0.92)"><path d="M-5.2,-2.4H2.8V4.6L-2,3.4L-5.2,4.4ZM-5.2,-2.4L-3.2,-4.6H5V2.4L2.8,4.6M2.8,-2.4L5,-4.6"/><path d="M-5.2,-2.4L-3.2,-4.6H5L2.8,-2.4Z" fill="#999" stroke="none" opacity=".6"/></g><g transform="translate(128.10,310.4) scale(0.92)"><path d="M-2.6,-3.3H2.6A3.3,3.3 0 0 1 2.6,3.3H-2.6A3.3,3.3 0 0 1 -2.6,-3.3Z"/></g><g transform="translate(141.40,310.4) scale(0.92)"><path d="M-3,-3.4H3L5.4,0L3,3.4H-3L-5.4,0Z"/></g><g transform="translate(154.70,310.4) scale(0.92)"><path d="M-5,-1.4L5,-3.8V3.8H-5Z"/></g><g transform="translate(168.00,310.4) scale(0.92)"><path d="M-5.3,-4H5.3L3,4H-3Z"/></g><g transform="translate(21.70,323.4) scale(0.92)"><circle r="4.9"/></g><g transform="translate(35.00,323.4) scale(0.92)"><path d="M-4,-4.8H4V1.6L0,5L-4,1.6Z"/></g><g transform="translate(48.30,323.4) scale(0.92)"><path d="M-2,-4.6H5V4.6H-5V-1.6Z"/></g><g transform="translate(61.60,323.4) scale(0.92)"><path d="M-5,-2.6Q-3.6,-4.6 -1.6,-3.4Q0.6,-2 2.4,-3.6Q4,-4.8 5,-4.4V3.2Q3.2,2.4 1.6,3.6Q-0.6,5.2 -2.6,3.8Q-4,3 -5,4Z"/></g><g transform="translate(74.90,323.4) scale(0.92)"><circle r="4.9"/><path d="M-3.5,-3.5L3.5,3.5M3.5,-3.5L-3.5,3.5"/></g><g transform="translate(88.20,323.4) scale(0.92)"><circle r="4.9"/><path d="M0,-4.9V4.9M-4.9,0H4.9"/></g><g transform="translate(101.50,323.4) scale(0.92)"><path d="M-3.6,-4.8H3.6L-3.6,4.8H3.6Z"/></g><g transform="translate(114.80,323.4) scale(0.92)"><path d="M0,-4.8L3.8,0L0,4.8L-3.8,0ZM-3.8,0H3.8"/></g><g transform="translate(128.10,323.4) scale(0.92)"><path d="M0,-4.4L5,4.6H-5Z"/></g><g transform="translate(141.40,323.4) scale(0.92)"><path d="M0,4.6L5,-4.4H-5Z"/></g><g transform="translate(154.70,323.4) scale(0.92)"><path d="M-2.4,-4.6H5.2Q2.6,-2.6 2.6,0Q2.6,2.6 5.2,4.6H-2.4Q-5.4,2.6 -5.4,0Q-5.4,-2.6 -2.4,-4.6Z"/></g><g transform="translate(168.00,323.4) scale(0.92)"><path d="M-5,-4.6H0.6A4.6,4.6 0 0 1 0.6,4.6H-5Z"/></g><g transform="translate(21.70,336.8) scale(0.92)"><circle r="4.9"/><path d="M1,4.8H5V3.4"/></g><g transform="translate(35.00,336.8) scale(0.92)"><path d="M-5,-1.8A5,1.8 0 0 1 5,-1.8V2.4A5,1.8 0 0 1 -5,2.4ZM-5,-1.8A5,1.8 0 0 0 5,-1.8"/></g><g transform="translate(48.30,336.8) scale(0.92)"><path d="M-2,-4.8H2A1.8,4.8 0 0 1 2,4.8H-2A1.8,4.8 0 0 1 -2,-4.8ZM2,-4.8A1.8,4.8 0 0 0 2,4.8"/><path d="M2,-4.8A1.8,4.8 0 0 0 2,4.8A1.8,4.8 0 0 0 2,-4.8Z" fill="#aaa" stroke="none" opacity=".5"/></g><g transform="translate(61.60,336.8) scale(0.92)"><path d="M-2.6,-4.6H2.4Q5.2,-3 5.2,0Q5.2,3 2.4,4.6H-2.6L-5.4,0Z"/></g><g transform="translate(21.70,376) scale(0.92)"><path d="M-5.2,-4.6H5.2V2H-0.6L-3.8,5.2L-3,2H-5.2Z"/></g><g transform="translate(35.00,376) scale(0.92)"><path d="M-3.6,-4.6H3.6Q5.2,-4.6 5.2,-3V0.4Q5.2,2 3.6,2H-0.6L-3.8,5.2L-3,2H-3.6Q-5.2,2 -5.2,0.4V-3Q-5.2,-4.6 -3.6,-4.6Z"/></g><g transform="translate(48.30,376) scale(0.92)"><path d="M-2.2,2.2L-4.6,5L-0.4,3A5.4,3.8 0 1 0 -2.2,2.2Z" transform="translate(0,-0.8)"/></g><g transform="translate(61.60,376) scale(0.92)"><path d="M-2.6,2.4Q-5,2.6 -4.6,0.4Q-5.6,-1.6 -3.6,-2.6Q-3,-4.8 -0.8,-4Q1,-5.4 2.6,-3.8Q4.8,-4 4.8,-2Q6,-0.4 4.4,1Q4.4,3 2.2,2.6Q0.6,4 -0.8,2.8Q-1.8,3.4 -2.6,2.4Z"/><circle cx="-3.6" cy="3.8" r=".8"/><circle cx="-4.8" cy="5" r=".5"/></g><g transform="translate(74.90,376) scale(0.92)"><rect x="-0.8" y="-3.4" width="6" height="6" stroke="#363636"/><path d="M-0.8,2.6H-5.2"/></g><g transform="translate(88.20,376) scale(0.92)"><rect x="-0.8" y="-3.4" width="6" height="6" stroke="#363636"/><path d="M-0.8,-1.4L-4.6,3.2"/></g><g transform="translate(101.50,376) scale(0.92)"><rect x="-0.8" y="-3.4" width="6" height="6" stroke="#363636"/><path d="M-0.8,-1.4H-2L-4.8,4.4"/></g><g transform="translate(114.80,376) scale(0.92)"><rect x="-0.8" y="-3.4" width="6" height="6" stroke="#363636"/><path d="M-0.8,-1.4H-2.6Q-5.6,0 -3.2,3.4"/></g><g transform="translate(128.10,376) scale(0.92)"><rect x="-0.8" y="-3.4" width="6" height="6" stroke="#4a4a4a" stroke-dasharray="1.7 1.1" stroke-linecap="butt"/><path d="M-0.8,2.6H-5.2"/></g><g transform="translate(141.40,376) scale(0.92)"><rect x="-0.8" y="-3.4" width="6" height="6" stroke="#4a4a4a" stroke-dasharray="1.7 1.1" stroke-linecap="butt"/><path d="M-0.8,-1.4L-4.6,3.2"/></g><g transform="translate(154.70,376) scale(0.92)"><rect x="-0.8" y="-3.4" width="6" height="6" stroke="#4a4a4a" stroke-dasharray="1.7 1.1" stroke-linecap="butt"/><path d="M-0.8,-1.4H-2L-4.8,4.4"/></g><g transform="translate(168.00,376) scale(0.92)"><rect x="-0.8" y="-3.4" width="6" height="6" stroke="#4a4a4a" stroke-dasharray="1.7 1.1" stroke-linecap="butt"/><path d="M-0.8,-1.4H-2.6Q-5.6,0 -3.2,3.4"/></g><g transform="translate(21.70,389.2) scale(0.92)"><rect x="-0.8" y="-3.4" width="6" height="6" stroke="#4a4a4a" stroke-dasharray="1.7 1.1" stroke-linecap="butt"/><path d="M-0.8,2.6H-5.2"/></g><g transform="translate(35.00,389.2) scale(0.92)"><rect x="-0.8" y="-3.4" width="6" height="6" stroke="#4a4a4a" stroke-dasharray="1.7 1.1" stroke-linecap="butt"/><path d="M-0.8,-1.4L-4.6,3.2"/></g><g transform="translate(48.30,389.2) scale(0.92)"><rect x="-0.8" y="-3.4" width="6" height="6" stroke="#4a4a4a" stroke-dasharray="1.7 1.1" stroke-linecap="butt"/><path d="M-0.8,-1.4H-2L-4.8,4.4"/></g><g transform="translate(61.60,389.2) scale(0.92)"><rect x="-0.8" y="-3.4" width="6" height="6" stroke="#4a4a4a" stroke-dasharray="1.7 1.1" stroke-linecap="butt"/><path d="M-0.8,-1.4H-2.6Q-5.6,0 -3.2,3.4"/></g><g transform="translate(74.90,389.2) scale(0.92)"><rect x="-0.8" y="-3.4" width="6" height="6" stroke="#363636"/><path d="M-0.8,2.6H-5.2"/><path d="M-0.8,-3.4V2.6" stroke-width="1.6"/></g><g transform="translate(88.20,389.2) scale(0.92)"><rect x="-0.8" y="-3.4" width="6" height="6" stroke="#363636"/><path d="M-0.8,-1.4L-4.6,3.2"/><path d="M-0.8,-3.4V2.6" stroke-width="1.6"/></g><g transform="translate(101.50,389.2) scale(0.92)"><rect x="-0.8" y="-3.4" width="6" height="6" stroke="#363636"/><path d="M-0.8,-1.4H-2L-4.8,4.4"/><path d="M-0.8,-3.4V2.6" stroke-width="1.6"/></g><g transform="translate(114.80,389.2) scale(0.92)"><rect x="-0.8" y="-3.4" width="6" height="6" stroke="#363636"/><path d="M-0.8,-1.4H-2.6Q-5.6,0 -3.2,3.4"/><path d="M-0.8,-3.4V2.6" stroke-width="1.6"/></g><g transform="translate(21.70,429) scale(0.92)"><path d="M0.00,-5.60L1.11,-2.68L3.25,-3.25L2.49,-1.03L5.40,0.00L2.77,1.15L3.39,3.39L0.99,2.40L0.00,5.60L-1.11,2.68L-3.11,3.11L-2.49,1.03L-5.20,0.00L-2.77,-1.15L-3.54,-3.54L-0.99,-2.40Z" stroke-width="1.1" transform="scale(.92)"/></g><g transform="translate(35.00,429) scale(0.92)"><path d="M1.00,-4.70L1.87,-2.72L4.70,-3.05L3.44,-0.64L4.50,0.96L2.64,1.81L2.94,4.53L0.66,3.54L-0.96,4.50L-1.87,2.72L-4.70,3.05L-3.44,0.64L-4.89,-1.04L-2.64,-1.81L-2.83,-4.36L-0.66,-3.54Z" stroke-width="1.1" transform="scale(.92)"/></g><g transform="translate(48.30,429) scale(0.92)"><path d="M0.00,-5.30L1.56,-1.56L5.30,0.00L1.56,1.56L0.00,5.30L-1.56,1.56L-5.30,0.00L-1.56,-1.56Z"/></g><g transform="translate(61.60,429) scale(0.92)"><path d="M0.00,-5.40L1.35,-1.86L5.14,-1.67L2.19,0.71L3.17,4.37L0.00,2.30L-3.17,4.37L-2.19,0.71L-5.14,-1.67L-1.35,-1.86Z"/></g><g transform="translate(74.90,429) scale(0.92)"><path d="M0.00,-5.30L1.65,-3.97L3.75,-3.75L3.97,-1.65L5.30,0.00L3.97,1.65L3.75,3.75L1.65,3.97L0.00,5.30L-1.65,3.97L-3.75,3.75L-3.97,1.65L-5.30,0.00L-3.97,-1.65L-3.75,-3.75L-1.65,-3.97Z" stroke-width="1.1"/><text x="0" y="1.4" font-size="4" text-anchor="middle" fill="#4a4a4a" stroke="none" font-family="Liberation Sans, sans-serif">8</text></g><g transform="translate(88.20,429) scale(0.92)"><rect x="-4.9" y="-5.1" width="9.8" height="10.2" rx="2.8" stroke-width="1.25" stroke-dasharray="1.5 0.75" stroke-linecap="butt"/><text x="0" y="1.35" font-size="3.9" text-anchor="middle" fill="#4a4a4a" stroke="none" font-family="Liberation Sans, sans-serif">16</text></g><g transform="translate(101.50,429) scale(0.92)"><rect x="-4.9" y="-5.1" width="9.8" height="10.2" rx="2.8" stroke-width="1.25" stroke-dasharray="1.5 0.75" stroke-linecap="butt"/><text x="0" y="1.35" font-size="3.9" text-anchor="middle" fill="#4a4a4a" stroke="none" font-family="Liberation Sans, sans-serif">24</text></g><g transform="translate(114.80,429) scale(0.92)"><rect x="-4.9" y="-5.1" width="9.8" height="10.2" rx="2.8" stroke-width="1.25" stroke-dasharray="1.5 0.75" stroke-linecap="butt"/><text x="0" y="1.35" font-size="3.9" text-anchor="middle" fill="#4a4a4a" stroke="none" font-family="Liberation Sans, sans-serif">32</text></g><g transform="translate(128.10,429) scale(0.92)"><path d="M-5.4,-1.6H-3V-3.6H3V-1.6H5.4L4.2,0.6L5.4,2.8H1.8V1H-1.8V2.8H-5.4L-4.2,0.6ZM-3,-1.6V1H-1.8M3,-1.6V1H1.8" stroke-width=".9"/></g><g transform="translate(141.40,429) scale(0.92)"><g transform="scale(1,-1)"><path d="M-5.4,-1.6H-3V-3.6H3V-1.6H5.4L4.2,0.6L5.4,2.8H1.8V1H-1.8V2.8H-5.4L-4.2,0.6ZM-3,-1.6V1H-1.8M3,-1.6V1H1.8" stroke-width=".9"/></g></g><g transform="translate(154.70,429) scale(0.92)"><path d="M-5.4,0.2Q-4.2,-1 -3,-1.4V-3.6Q0,-5 3,-3.6V-1.4Q4.2,-1 5.4,0.2L4.2,2L5.4,4.4Q3.6,3 1.8,2.8V1Q0,0.6 -1.8,1V2.8Q-3.6,3 -5.4,4.4L-4.2,2Z" stroke-width=".9"/></g><g transform="translate(168.00,429) scale(0.92)"><g transform="scale(1,-1)"><path d="M-5.4,0.2Q-4.2,-1 -3,-1.4V-3.6Q0,-5 3,-3.6V-1.4Q4.2,-1 5.4,0.2L4.2,2L5.4,4.4Q3.6,3 1.8,2.8V1Q0,0.6 -1.8,1V2.8Q-3.6,3 -5.4,4.4L-4.2,2Z" stroke-width=".9"/></g></g><g transform="translate(21.70,442.4) scale(0.92)"><path d="M-3.6,-3.6V5H3.6V-3.6M-3.6,-3.6Q-3.6,-5.2 -2,-5.2H4Q5.4,-5.2 5.2,-3.6H-2.2Q-2,-4.6 -3,-4.4M-3.6,5Q-5.2,5 -5.2,3.6H-3.6"/></g><g transform="translate(35.00,442.4) scale(0.92)"><path d="M-3.6,-3.6H5.2V3.6H-3.6M-3.6,-3.6Q-5.2,-3.6 -5.2,-2V4Q-5.2,5.4 -3.6,5.2V-2.2Q-4.6,-2 -4.4,-3M5.2,-3.6Q5.2,-5.2 3.8,-5.2V-3.6"/></g><g transform="translate(48.30,442.4) scale(0.92)"><path d="M-5,-3.6Q-2.5,-5.6 0,-3.6Q2.5,-1.6 5,-3.6V3.6Q2.5,5.6 0,3.6Q-2.5,1.6 -5,3.6Z"/></g><g transform="translate(61.60,442.4) scale(0.92)"><path d="M-5,-3.8Q-3.8,-5.2 -2.5,-3.8Q-1.2,-2.4 0,-3.8Q1.2,-5.2 2.5,-3.8Q3.8,-2.4 5,-3.8V3.8Q3.8,5.2 2.5,3.8Q1.2,2.4 0,3.8Q-1.2,5.2 -2.5,3.8Q-3.8,2.4 -5,3.8Z"/></g><g transform="translate(104.6,100.6)"><path d="M-4.2,-6.2V4.6L-1.6,2.2L0.4,6.4L2.2,5.6L0.2,1.4H3.8Z" fill="#fff" stroke="#3a3a3a" stroke-width="1.3" stroke-linejoin="round"/></g></svg>
<div class="abs" style="left:180.4px;top:458px;width:1.1px;height:1.1px;background:#777"></div><div class="abs" style="left:182.8px;top:458px;width:1.1px;height:1.1px;background:#777"></div><div class="abs" style="left:182.8px;top:455.6px;width:1.1px;height:1.1px;background:#777"></div>
</div></body></html>
